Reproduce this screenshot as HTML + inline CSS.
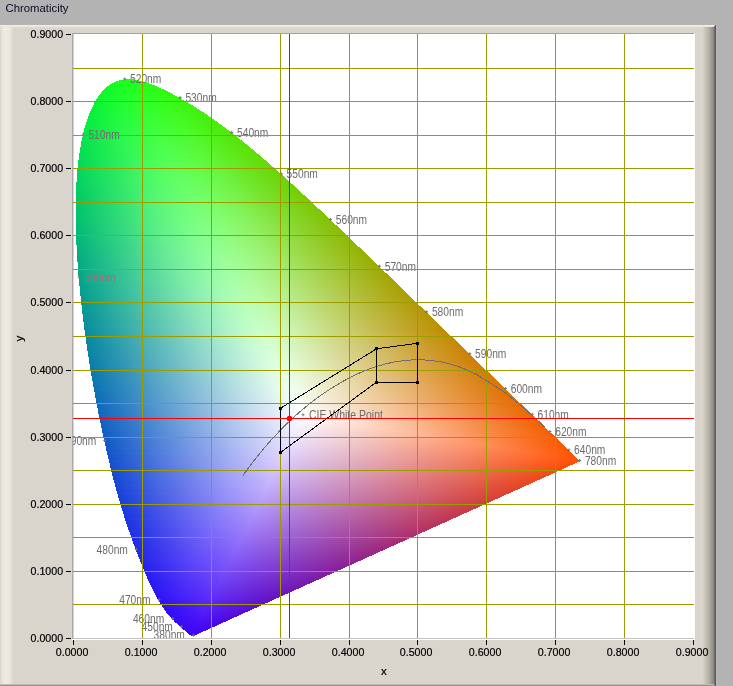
<!DOCTYPE html>
<html><head><meta charset="utf-8"><title>Chromaticity</title>
<style>
html,body{margin:0;padding:0;background:#b3b3b3;}
body{width:733px;height:686px;overflow:hidden;font-family:"Liberation Sans",sans-serif;}
svg{display:block;position:absolute;left:0;top:0;will-change:transform;}
text{font-family:"Liberation Sans",sans-serif;}
</style></head><body>
<svg width="733" height="686" viewBox="0 0 733 686">
<defs>
<linearGradient id="bl" x1="0" x2="1" y1="0" y2="0"><stop offset="0" stop-color="#d8d3c6"/><stop offset="0.12" stop-color="#e6e2d8"/><stop offset="0.4" stop-color="#efece5"/><stop offset="0.7" stop-color="#ebe7de"/><stop offset="0.9" stop-color="#e3dfd5"/><stop offset="1" stop-color="#dad6ce"/></linearGradient>
<linearGradient id="br" x1="0" x2="1" y1="0" y2="0"><stop offset="0" stop-color="#d6d2c6"/><stop offset="0.45" stop-color="#b4b0a6"/><stop offset="0.8" stop-color="#8e8b83"/><stop offset="0.9" stop-color="#6a6862"/><stop offset="1" stop-color="#55534d"/></linearGradient>
<clipPath id="cp"><rect x="73" y="34" width="621" height="604"/></clipPath>
<clipPath id="cl" clip-path="url(#cp)"><path d="M193.5 636.1 L193.4 636.1 L193.4 636.1 L193.4 636.1 L193.4 636.1 L193.4 636.1 L193.4 636.1 L193.3 636.1 L193.3 636.1 L193.3 636.1 L193.3 636.1 L193.3 636.1 L193.2 636.1 L193.2 636.2 L193.2 636.2 L193.1 636.2 L193.1 636.2 L193.1 636.2 L193.1 636.2 L193.0 636.2 L193.0 636.2 L193.0 636.2 L192.9 636.2 L192.9 636.2 L192.8 636.2 L192.8 636.2 L192.8 636.2 L192.7 636.2 L192.7 636.2 L192.7 636.2 L192.6 636.2 L192.6 636.2 L192.5 636.2 L192.5 636.2 L192.5 636.2 L192.4 636.2 L192.4 636.2 L192.3 636.2 L192.3 636.2 L192.2 636.2 L192.2 636.2 L192.1 636.2 L192.0 636.2 L192.0 636.2 L191.9 636.2 L191.8 636.2 L191.7 636.1 L191.6 636.1 L191.5 636.1 L191.4 636.0 L191.3 636.0 L191.2 635.9 L191.1 635.9 L191.0 635.8 L190.9 635.7 L190.8 635.6 L190.6 635.6 L190.5 635.5 L190.3 635.3 L190.2 635.2 L190.0 635.1 L189.8 635.0 L189.6 634.8 L189.5 634.7 L189.3 634.5 L189.1 634.3 L188.9 634.1 L188.6 634.0 L188.4 633.8 L188.2 633.5 L187.9 633.3 L187.6 633.1 L187.4 632.8 L187.1 632.6 L186.8 632.3 L186.4 632.1 L186.1 631.8 L185.8 631.5 L185.4 631.2 L185.0 630.8 L184.6 630.5 L184.2 630.2 L183.8 629.8 L183.3 629.4 L182.9 629.0 L182.4 628.6 L181.9 628.2 L181.3 627.7 L180.8 627.2 L180.2 626.7 L179.6 626.2 L179.0 625.7 L178.3 625.1 L177.6 624.5 L177.0 623.9 L176.2 623.2 L175.5 622.5 L174.7 621.8 L174.0 621.0 L173.2 620.2 L172.3 619.4 L171.5 618.5 L170.6 617.5 L169.7 616.5 L168.7 615.4 L167.8 614.2 L166.7 612.8 L165.6 611.3 L164.4 609.7 L163.2 607.9 L161.9 605.9 L160.6 603.8 L159.2 601.6 L157.8 599.1 L156.3 596.5 L154.8 593.6 L153.2 590.5 L151.5 587.2 L149.8 583.6 L148.0 579.7 L146.2 575.6 L144.3 571.1 L142.3 566.3 L140.2 561.1 L138.1 555.6 L135.8 549.7 L133.5 543.5 L131.1 536.8 L128.6 529.8 L126.0 522.3 L123.5 514.4 L120.9 506.0 L118.3 497.2 L115.7 487.9 L113.1 478.1 L110.6 467.9 L108.0 457.2 L105.4 446.0 L102.9 434.4 L100.3 422.4 L97.8 410.0 L95.4 397.3 L93.0 384.3 L90.7 371.1 L88.6 357.7 L86.5 344.2 L84.6 330.6 L82.9 317.0 L81.3 303.5 L79.9 290.0 L78.6 276.7 L77.6 263.5 L76.8 250.6 L76.2 237.9 L75.8 225.5 L75.6 213.4 L75.7 201.5 L76.1 190.1 L76.7 179.0 L77.6 168.3 L78.8 158.1 L80.2 148.4 L81.9 139.2 L83.9 130.6 L86.2 122.6 L88.7 115.2 L91.5 108.5 L94.5 102.5 L97.8 97.2 L101.2 92.6 L104.8 88.7 L108.6 85.6 L112.5 83.1 L116.6 81.3 L120.8 80.0 L125.0 79.3 L129.3 79.2 L133.7 79.5 L138.1 80.2 L142.6 81.3 L147.1 82.6 L151.6 84.3 L156.1 86.1 L160.6 88.1 L165.1 90.2 L169.6 92.4 L174.0 94.8 L178.4 97.2 L182.8 99.7 L187.1 102.2 L191.4 104.7 L195.6 107.3 L199.7 110.0 L203.9 112.7 L208.0 115.5 L212.1 118.3 L216.1 121.2 L220.2 124.1 L224.2 127.1 L228.2 130.1 L232.3 133.2 L236.3 136.3 L240.3 139.4 L244.3 142.7 L248.3 145.9 L252.2 149.2 L256.2 152.5 L260.2 155.9 L264.1 159.3 L268.1 162.7 L272.0 166.1 L276.0 169.6 L279.9 173.1 L283.9 176.6 L287.8 180.2 L291.7 183.7 L295.7 187.3 L299.6 190.9 L303.6 194.6 L307.5 198.2 L311.4 201.9 L315.4 205.6 L319.3 209.3 L323.3 213.0 L327.2 216.7 L331.2 220.4 L335.1 224.2 L339.1 227.9 L343.0 231.6 L346.9 235.4 L350.8 239.2 L354.7 242.9 L358.7 246.7 L362.6 250.4 L366.5 254.2 L370.4 257.9 L374.3 261.7 L378.2 265.4 L382.1 269.2 L385.9 272.9 L389.8 276.6 L393.6 280.3 L397.4 284.0 L401.2 287.7 L405.0 291.4 L408.7 295.0 L412.5 298.6 L416.2 302.3 L419.9 305.9 L423.6 309.4 L427.2 313.0 L430.9 316.5 L434.5 320.0 L438.1 323.5 L441.6 326.9 L445.1 330.4 L448.6 333.7 L452.1 337.1 L455.5 340.4 L458.9 343.7 L462.2 346.9 L465.5 350.1 L468.8 353.2 L472.0 356.4 L475.2 359.5 L478.3 362.5 L481.3 365.5 L484.3 368.4 L487.3 371.3 L490.1 374.0 L492.9 376.7 L495.6 379.4 L498.3 382.0 L500.9 384.5 L503.5 387.0 L506.0 389.4 L508.4 391.8 L510.9 394.1 L513.2 396.4 L515.6 398.7 L517.8 400.9 L520.0 403.0 L522.1 405.0 L524.2 407.0 L526.1 408.9 L528.1 410.8 L529.9 412.5 L531.7 414.3 L533.5 416.0 L535.1 417.6 L536.8 419.2 L538.3 420.7 L539.9 422.2 L541.3 423.6 L542.7 425.0 L544.1 426.3 L545.4 427.6 L546.7 428.8 L547.9 430.0 L549.1 431.2 L550.2 432.3 L551.3 433.3 L552.3 434.3 L553.4 435.3 L554.3 436.3 L555.3 437.2 L556.2 438.1 L557.1 438.9 L557.9 439.7 L558.7 440.5 L559.5 441.3 L560.3 442.1 L561.1 442.8 L561.8 443.5 L562.5 444.2 L563.2 444.9 L563.9 445.5 L564.5 446.1 L565.1 446.8 L565.8 447.4 L566.4 447.9 L566.9 448.5 L567.5 449.0 L568.0 449.6 L568.5 450.1 L569.0 450.5 L569.5 451.0 L570.0 451.5 L570.4 451.9 L570.8 452.3 L571.2 452.7 L571.6 453.1 L572.0 453.4 L572.4 453.8 L572.7 454.1 L573.0 454.4 L573.4 454.7 L573.7 455.0 L574.0 455.3 L574.2 455.5 L574.5 455.8 L574.8 456.1 L575.0 456.3 L575.2 456.5 L575.4 456.7 L575.7 456.9 L575.9 457.1 L576.0 457.3 L576.2 457.5 L576.4 457.6 L576.5 457.8 L576.7 457.9 L576.8 458.1 L577.0 458.2 L577.1 458.3 L577.2 458.4 L577.3 458.5 L577.4 458.6 L577.5 458.7 L577.6 458.8 L577.7 458.9 L577.8 459.0 L577.9 459.1 L577.9 459.2 L578.0 459.2 L578.1 459.3 L578.2 459.4 L578.3 459.5 L578.4 459.6 L578.4 459.6 L578.5 459.7 L578.6 459.8 L578.7 459.9 L578.7 459.9 L578.8 460.0 L578.9 460.1 L578.9 460.1 L579.0 460.2 L579.1 460.3 L579.1 460.3 L579.2 460.4 L579.2 460.4 L579.3 460.5 L579.3 460.5 L579.4 460.6 L579.4 460.6 L579.5 460.7 L579.5 460.7 L579.6 460.7 L579.6 460.8 L579.6 460.8 L579.7 460.8 L579.7 460.9 L579.7 460.9 L579.7 460.9 L579.7 460.9 L579.7 460.9 L579.8 460.9 L579.7 460.9 L579.7 460.9 L578.7 461.8 L574.8 463.6 L570.9 465.3 L567.1 467.1 L563.2 468.8 L559.3 470.6 L555.5 472.4 L551.6 474.1 L547.7 475.9 L543.8 477.6 L540.0 479.4 L536.1 481.1 L532.2 482.9 L528.4 484.6 L524.5 486.4 L520.6 488.1 L516.7 489.9 L512.9 491.6 L509.0 493.4 L505.1 495.1 L501.3 496.9 L497.4 498.6 L493.5 500.4 L489.6 502.1 L485.8 503.9 L481.9 505.6 L478.0 507.4 L474.2 509.1 L470.3 510.9 L466.4 512.6 L462.5 514.4 L458.7 516.1 L454.8 517.9 L450.9 519.6 L447.1 521.4 L443.2 523.1 L439.3 524.9 L435.4 526.6 L431.6 528.4 L427.7 530.1 L423.8 531.9 L420.0 533.6 L416.1 535.4 L412.2 537.1 L408.3 538.9 L404.5 540.6 L400.6 542.4 L396.7 544.1 L392.9 545.9 L389.0 547.6 L385.1 549.4 L381.2 551.1 L377.4 552.9 L373.5 554.6 L369.6 556.4 L365.7 558.1 L361.9 559.9 L358.0 561.7 L354.1 563.4 L350.3 565.2 L346.4 566.9 L342.5 568.7 L338.6 570.4 L334.8 572.2 L330.9 573.9 L327.0 575.7 L323.2 577.4 L319.3 579.2 L315.4 580.9 L311.5 582.7 L307.7 584.4 L303.8 586.2 L299.9 587.9 L296.1 589.7 L292.2 591.4 L288.3 593.2 L284.4 594.9 L280.6 596.7 L276.7 598.4 L272.8 600.2 L269.0 601.9 L265.1 603.7 L261.2 605.4 L257.3 607.2 L253.5 608.9 L249.6 610.7 L245.7 612.4 L241.9 614.2 L238.0 615.9 L234.1 617.7 L230.2 619.4 L226.4 621.2 L222.5 622.9 L218.6 624.7 L214.8 626.4 L210.9 628.2 L207.0 629.9 L203.1 631.7 L199.3 633.4 L195.4 635.2Z" shape-rendering="crispEdges"/></clipPath>
<linearGradient id="g1" gradientUnits="userSpaceOnUse" x1="121" x2="137" y1="0" y2="0"><stop offset="0" stop-color="#18ff1d"/><stop offset="1" stop-color="#21ff16"/></linearGradient>
<linearGradient id="g2" gradientUnits="userSpaceOnUse" x1="114" x2="145" y1="0" y2="0"><stop offset="0" stop-color="#15fe21"/><stop offset="1" stop-color="#25fe14"/></linearGradient>
<linearGradient id="g3" gradientUnits="userSpaceOnUse" x1="110" x2="151" y1="0" y2="0"><stop offset="0" stop-color="#13fd24"/><stop offset="0.3902" stop-color="#1dff1f"/><stop offset="1" stop-color="#28fd12"/></linearGradient>
<linearGradient id="g4" gradientUnits="userSpaceOnUse" x1="107" x2="156" y1="0" y2="0"><stop offset="0" stop-color="#11fc26"/><stop offset="0.4082" stop-color="#1eff20"/><stop offset="1" stop-color="#2afc11"/></linearGradient>
<linearGradient id="g5" gradientUnits="userSpaceOnUse" x1="105" x2="161" y1="0" y2="0"><stop offset="0" stop-color="#10fb28"/><stop offset="0.5893" stop-color="#24ff1d"/><stop offset="1" stop-color="#2dfb10"/></linearGradient>
<linearGradient id="g6" gradientUnits="userSpaceOnUse" x1="103" x2="165" y1="0" y2="0"><stop offset="0" stop-color="#0ffa2a"/><stop offset="0.5806" stop-color="#26ff1f"/><stop offset="1" stop-color="#2ffa0f"/></linearGradient>
<linearGradient id="g7" gradientUnits="userSpaceOnUse" x1="101" x2="169" y1="0" y2="0"><stop offset="0" stop-color="#0ef92b"/><stop offset="0.4265" stop-color="#22ff24"/><stop offset="1" stop-color="#31f90e"/></linearGradient>
<linearGradient id="g8" gradientUnits="userSpaceOnUse" x1="99" x2="173" y1="0" y2="0"><stop offset="0" stop-color="#0df82d"/><stop offset="0.4324" stop-color="#23ff26"/><stop offset="0.6892" stop-color="#2cfe1d"/><stop offset="1" stop-color="#33f80d"/></linearGradient>
<linearGradient id="g9" gradientUnits="userSpaceOnUse" x1="98" x2="177" y1="0" y2="0"><stop offset="0" stop-color="#0df72f"/><stop offset="0.4937" stop-color="#28ff25"/><stop offset="1" stop-color="#35f70c"/></linearGradient>
<linearGradient id="g10" gradientUnits="userSpaceOnUse" x1="96" x2="180" y1="0" y2="0"><stop offset="0" stop-color="#0cf630"/><stop offset="0.2738" stop-color="#1dfd2d"/><stop offset="0.5" stop-color="#29ff27"/><stop offset="1" stop-color="#37f70c"/></linearGradient>
<linearGradient id="g11" gradientUnits="userSpaceOnUse" x1="95" x2="184" y1="0" y2="0"><stop offset="0" stop-color="#0bf532"/><stop offset="0.2697" stop-color="#1efd2e"/><stop offset="0.4944" stop-color="#2aff28"/><stop offset="0.7079" stop-color="#32fd1e"/><stop offset="1" stop-color="#39f50b"/></linearGradient>
<linearGradient id="g12" gradientUnits="userSpaceOnUse" x1="94" x2="187" y1="0" y2="0"><stop offset="0" stop-color="#0bf533"/><stop offset="0.2688" stop-color="#1efd30"/><stop offset="0.4946" stop-color="#2cff2a"/><stop offset="0.7097" stop-color="#34fd1e"/><stop offset="1" stop-color="#3af50b"/></linearGradient>
<linearGradient id="g13" gradientUnits="userSpaceOnUse" x1="93" x2="191" y1="0" y2="0"><stop offset="0" stop-color="#0af434"/><stop offset="0.2653" stop-color="#1ffc32"/><stop offset="0.4898" stop-color="#2dff2b"/><stop offset="0.7041" stop-color="#35fd1f"/><stop offset="1" stop-color="#3cf40a"/></linearGradient>
<linearGradient id="g14" gradientUnits="userSpaceOnUse" x1="92" x2="194" y1="0" y2="0"><stop offset="0" stop-color="#0af336"/><stop offset="0.2745" stop-color="#20fc33"/><stop offset="0.4902" stop-color="#2eff2c"/><stop offset="0.7059" stop-color="#37fc20"/><stop offset="1" stop-color="#3ef309"/></linearGradient>
<linearGradient id="g15" gradientUnits="userSpaceOnUse" x1="91" x2="197" y1="0" y2="0"><stop offset="0" stop-color="#09f237"/><stop offset="0.2736" stop-color="#21fc35"/><stop offset="0.4906" stop-color="#30ff2e"/><stop offset="0.7075" stop-color="#39fc21"/><stop offset="1" stop-color="#3ff209"/></linearGradient>
<linearGradient id="g16" gradientUnits="userSpaceOnUse" x1="90" x2="200" y1="0" y2="0"><stop offset="0" stop-color="#09f138"/><stop offset="0.2727" stop-color="#22fc36"/><stop offset="0.4909" stop-color="#31ff2f"/><stop offset="0.7091" stop-color="#3afc21"/><stop offset="1" stop-color="#41f108"/></linearGradient>
<linearGradient id="g17" gradientUnits="userSpaceOnUse" x1="89" x2="203" y1="0" y2="0"><stop offset="0" stop-color="#08f03a"/><stop offset="0.2807" stop-color="#23fc37"/><stop offset="0.5" stop-color="#33ff30"/><stop offset="0.7105" stop-color="#3cfc22"/><stop offset="1" stop-color="#42f008"/></linearGradient>
<linearGradient id="g18" gradientUnits="userSpaceOnUse" x1="88" x2="206" y1="0" y2="0"><stop offset="0" stop-color="#08ef3b"/><stop offset="0.2797" stop-color="#24fb39"/><stop offset="0.5" stop-color="#34ff32"/><stop offset="0.7119" stop-color="#3efb23"/><stop offset="1" stop-color="#44ef08"/></linearGradient>
<linearGradient id="g19" gradientUnits="userSpaceOnUse" x1="88" x2="209" y1="0" y2="0"><stop offset="0" stop-color="#08ee3c"/><stop offset="0.281" stop-color="#25fb3a"/><stop offset="0.4959" stop-color="#36ff33"/><stop offset="0.7107" stop-color="#3ffb24"/><stop offset="1" stop-color="#45ee07"/></linearGradient>
<linearGradient id="g20" gradientUnits="userSpaceOnUse" x1="87" x2="212" y1="0" y2="0"><stop offset="0" stop-color="#07ed3d"/><stop offset="0.28" stop-color="#26fb3c"/><stop offset="0.496" stop-color="#37ff35"/><stop offset="0.704" stop-color="#41fb25"/><stop offset="1" stop-color="#47ed07"/></linearGradient>
<linearGradient id="g21" gradientUnits="userSpaceOnUse" x1="86" x2="215" y1="0" y2="0"><stop offset="0" stop-color="#07ec3e"/><stop offset="0.2791" stop-color="#26fb3d"/><stop offset="0.4961" stop-color="#39ff36"/><stop offset="0.7054" stop-color="#42fb26"/><stop offset="1" stop-color="#48ec07"/></linearGradient>
<linearGradient id="g22" gradientUnits="userSpaceOnUse" x1="85" x2="218" y1="0" y2="0"><stop offset="0" stop-color="#07eb40"/><stop offset="0.2782" stop-color="#27fa3f"/><stop offset="0.4962" stop-color="#3aff37"/><stop offset="0.7068" stop-color="#44fb26"/><stop offset="1" stop-color="#4aeb06"/></linearGradient>
<linearGradient id="g23" gradientUnits="userSpaceOnUse" x1="85" x2="221" y1="0" y2="0"><stop offset="0" stop-color="#06eb41"/><stop offset="0.2794" stop-color="#28fa40"/><stop offset="0.4926" stop-color="#3bff39"/><stop offset="0.7059" stop-color="#45fa27"/><stop offset="1" stop-color="#4cea06"/></linearGradient>
<linearGradient id="g24" gradientUnits="userSpaceOnUse" x1="84" x2="223" y1="0" y2="0"><stop offset="0" stop-color="#06e942"/><stop offset="0.2806" stop-color="#29fa42"/><stop offset="0.4964" stop-color="#3dff3a"/><stop offset="0.705" stop-color="#47fa28"/><stop offset="1" stop-color="#4dea06"/></linearGradient>
<linearGradient id="g25" gradientUnits="userSpaceOnUse" x1="84" x2="226" y1="0" y2="0"><stop offset="0" stop-color="#06e943"/><stop offset="0.2817" stop-color="#2afa43"/><stop offset="0.493" stop-color="#3eff3c"/><stop offset="0.7042" stop-color="#48fa29"/><stop offset="1" stop-color="#4ee905"/></linearGradient>
<linearGradient id="g26" gradientUnits="userSpaceOnUse" x1="83" x2="229" y1="0" y2="0"><stop offset="0" stop-color="#05e844"/><stop offset="0.2808" stop-color="#2afa45"/><stop offset="0.4932" stop-color="#3fff3d"/><stop offset="0.7055" stop-color="#4afa2a"/><stop offset="1" stop-color="#50e805"/></linearGradient>
<linearGradient id="g27" gradientUnits="userSpaceOnUse" x1="83" x2="231" y1="0" y2="0"><stop offset="0" stop-color="#05e745"/><stop offset="0.2838" stop-color="#2cfa46"/><stop offset="0.4932" stop-color="#41ff3f"/><stop offset="0.7095" stop-color="#4bf92a"/><stop offset="1" stop-color="#51e705"/></linearGradient>
<linearGradient id="g28" gradientUnits="userSpaceOnUse" x1="82" x2="234" y1="0" y2="0"><stop offset="0" stop-color="#05e646"/><stop offset="0.2895" stop-color="#2dfa47"/><stop offset="0.4934" stop-color="#42ff40"/><stop offset="0.7039" stop-color="#4df92c"/><stop offset="1" stop-color="#52e605"/></linearGradient>
<linearGradient id="g29" gradientUnits="userSpaceOnUse" x1="82" x2="237" y1="0" y2="0"><stop offset="0" stop-color="#05e547"/><stop offset="0.2839" stop-color="#2ef949"/><stop offset="0.4903" stop-color="#44ff41"/><stop offset="0.7032" stop-color="#4ef92c"/><stop offset="1" stop-color="#54e504"/></linearGradient>
<linearGradient id="g30" gradientUnits="userSpaceOnUse" x1="81" x2="239" y1="0" y2="0"><stop offset="0" stop-color="#04e449"/><stop offset="0.2911" stop-color="#2ff94a"/><stop offset="0.4937" stop-color="#45ff43"/><stop offset="0.7089" stop-color="#50f82d"/><stop offset="1" stop-color="#55e404"/></linearGradient>
<linearGradient id="g31" gradientUnits="userSpaceOnUse" x1="81" x2="242" y1="0" y2="0"><stop offset="0" stop-color="#04e34a"/><stop offset="0.2857" stop-color="#2ff94c"/><stop offset="0.4907" stop-color="#46ff44"/><stop offset="0.7081" stop-color="#51f82e"/><stop offset="1" stop-color="#56e304"/></linearGradient>
<linearGradient id="g32" gradientUnits="userSpaceOnUse" x1="80" x2="244" y1="0" y2="0"><stop offset="0" stop-color="#04e24b"/><stop offset="0.2927" stop-color="#31f94d"/><stop offset="0.4939" stop-color="#48ff46"/><stop offset="0.7073" stop-color="#53f82f"/><stop offset="1" stop-color="#57e204"/></linearGradient>
<linearGradient id="g33" gradientUnits="userSpaceOnUse" x1="80" x2="247" y1="0" y2="0"><stop offset="0" stop-color="#04e14c"/><stop offset="0.2874" stop-color="#31f84e"/><stop offset="0.491" stop-color="#49ff47"/><stop offset="0.7066" stop-color="#54f830"/><stop offset="1" stop-color="#59e104"/></linearGradient>
<linearGradient id="g34" gradientUnits="userSpaceOnUse" x1="80" x2="249" y1="0" y2="0"><stop offset="0" stop-color="#04e14d"/><stop offset="0.2899" stop-color="#33f850"/><stop offset="0.4911" stop-color="#4aff49"/><stop offset="0.7101" stop-color="#56f730"/><stop offset="1" stop-color="#5ae003"/></linearGradient>
<linearGradient id="g35" gradientUnits="userSpaceOnUse" x1="79" x2="252" y1="0" y2="0"><stop offset="0" stop-color="#04df4e"/><stop offset="0.289" stop-color="#33f851"/><stop offset="0.4913" stop-color="#4cff4a"/><stop offset="0.711" stop-color="#57f731"/><stop offset="1" stop-color="#5bdf03"/></linearGradient>
<linearGradient id="g36" gradientUnits="userSpaceOnUse" x1="79" x2="254" y1="0" y2="0"><stop offset="0" stop-color="#03df4f"/><stop offset="0.2914" stop-color="#34f853"/><stop offset="0.4914" stop-color="#4dff4b"/><stop offset="0.7086" stop-color="#59f732"/><stop offset="1" stop-color="#5cdf03"/></linearGradient>
<linearGradient id="g37" gradientUnits="userSpaceOnUse" x1="79" x2="256" y1="0" y2="0"><stop offset="0" stop-color="#03de50"/><stop offset="0.2881" stop-color="#35f754"/><stop offset="0.4915" stop-color="#4fff4d"/><stop offset="0.7119" stop-color="#5af733"/><stop offset="1" stop-color="#5dde03"/></linearGradient>
<linearGradient id="g38" gradientUnits="userSpaceOnUse" x1="78" x2="259" y1="0" y2="0"><stop offset="0" stop-color="#03dd51"/><stop offset="0.2928" stop-color="#36f755"/><stop offset="0.4917" stop-color="#50ff4e"/><stop offset="0.5912" stop-color="#57fd44"/><stop offset="0.7127" stop-color="#5cf633"/><stop offset="1" stop-color="#5fdd03"/></linearGradient>
<linearGradient id="g39" gradientUnits="userSpaceOnUse" x1="78" x2="261" y1="0" y2="0"><stop offset="0" stop-color="#03dc52"/><stop offset="0.2951" stop-color="#37f757"/><stop offset="0.4918" stop-color="#51ff50"/><stop offset="0.5902" stop-color="#58fd46"/><stop offset="0.7104" stop-color="#5df635"/><stop offset="1" stop-color="#60dc03"/></linearGradient>
<linearGradient id="g40" gradientUnits="userSpaceOnUse" x1="78" x2="263" y1="0" y2="0"><stop offset="0" stop-color="#03db53"/><stop offset="0.2919" stop-color="#38f758"/><stop offset="0.4919" stop-color="#53ff51"/><stop offset="0.7027" stop-color="#5ef637"/><stop offset="1" stop-color="#61db03"/></linearGradient>
<linearGradient id="g41" gradientUnits="userSpaceOnUse" x1="78" x2="266" y1="0" y2="0"><stop offset="0" stop-color="#03da54"/><stop offset="0.2926" stop-color="#39f759"/><stop offset="0.4894" stop-color="#54ff53"/><stop offset="0.5851" stop-color="#5bfd48"/><stop offset="0.7074" stop-color="#60f637"/><stop offset="1" stop-color="#62da02"/></linearGradient>
<linearGradient id="g42" gradientUnits="userSpaceOnUse" x1="77" x2="268" y1="0" y2="0"><stop offset="0" stop-color="#03d955"/><stop offset="0.2984" stop-color="#3af75b"/><stop offset="0.4031" stop-color="#4bfd59"/><stop offset="0.4974" stop-color="#56ff54"/><stop offset="0.5916" stop-color="#5dfd49"/><stop offset="0.7173" stop-color="#61f536"/><stop offset="1" stop-color="#63d902"/></linearGradient>
<linearGradient id="g43" gradientUnits="userSpaceOnUse" x1="77" x2="270" y1="0" y2="0"><stop offset="0" stop-color="#02d856"/><stop offset="0.3005" stop-color="#3cf75c"/><stop offset="0.4041" stop-color="#4cfd5a"/><stop offset="0.4974" stop-color="#57ff55"/><stop offset="0.5907" stop-color="#5efd4b"/><stop offset="0.7098" stop-color="#63f539"/><stop offset="1" stop-color="#64d802"/></linearGradient>
<linearGradient id="g44" gradientUnits="userSpaceOnUse" x1="77" x2="273" y1="0" y2="0"><stop offset="0" stop-color="#02d757"/><stop offset="0.2959" stop-color="#3cf65d"/><stop offset="0.4031" stop-color="#4efd5c"/><stop offset="0.4949" stop-color="#59ff56"/><stop offset="0.5918" stop-color="#60fc4b"/><stop offset="0.7143" stop-color="#64f438"/><stop offset="1" stop-color="#66d702"/></linearGradient>
<linearGradient id="g45" gradientUnits="userSpaceOnUse" x1="77" x2="275" y1="0" y2="0"><stop offset="0" stop-color="#02d758"/><stop offset="0.298" stop-color="#3ef65f"/><stop offset="0.404" stop-color="#4ffd5d"/><stop offset="0.4949" stop-color="#5aff58"/><stop offset="0.5909" stop-color="#61fc4d"/><stop offset="0.7121" stop-color="#65f43a"/><stop offset="1" stop-color="#67d602"/></linearGradient>
<linearGradient id="g46" gradientUnits="userSpaceOnUse" x1="76" x2="277" y1="0" y2="0"><stop offset="0" stop-color="#02d559"/><stop offset="0.3035" stop-color="#3ff660"/><stop offset="0.408" stop-color="#50fd5f"/><stop offset="0.4975" stop-color="#5bff59"/><stop offset="0.592" stop-color="#62fc4e"/><stop offset="0.7114" stop-color="#67f43b"/><stop offset="1" stop-color="#68d602"/></linearGradient>
<linearGradient id="g47" gradientUnits="userSpaceOnUse" x1="76" x2="279" y1="0" y2="0"><stop offset="0" stop-color="#02d45a"/><stop offset="0.3005" stop-color="#3ff561"/><stop offset="0.4089" stop-color="#52fd60"/><stop offset="0.4975" stop-color="#5dff5b"/><stop offset="0.5911" stop-color="#64fc4f"/><stop offset="0.7094" stop-color="#68f43c"/><stop offset="1" stop-color="#69d502"/></linearGradient>
<linearGradient id="g48" gradientUnits="userSpaceOnUse" x1="76" x2="282" y1="0" y2="0"><stop offset="0" stop-color="#02d45b"/><stop offset="0.301" stop-color="#41f563"/><stop offset="0.4078" stop-color="#53fd61"/><stop offset="0.4951" stop-color="#5eff5c"/><stop offset="0.5874" stop-color="#65fc51"/><stop offset="0.7087" stop-color="#6af43d"/><stop offset="1" stop-color="#6bd302"/></linearGradient>
<linearGradient id="g49" gradientUnits="userSpaceOnUse" x1="76" x2="284" y1="0" y2="0"><stop offset="0" stop-color="#02d35c"/><stop offset="0.3029" stop-color="#42f564"/><stop offset="0.4087" stop-color="#54fd63"/><stop offset="0.4952" stop-color="#60ff5d"/><stop offset="0.5913" stop-color="#67fc52"/><stop offset="0.7115" stop-color="#6bf33d"/><stop offset="1" stop-color="#6cd302"/></linearGradient>
<linearGradient id="g50" gradientUnits="userSpaceOnUse" x1="76" x2="286" y1="0" y2="0"><stop offset="0" stop-color="#02d25d"/><stop offset="0.3" stop-color="#42f565"/><stop offset="0.4048" stop-color="#55fd64"/><stop offset="0.4952" stop-color="#61ff5f"/><stop offset="0.5857" stop-color="#68fc54"/><stop offset="0.7" stop-color="#6cf441"/><stop offset="1" stop-color="#6dd202"/></linearGradient>
<linearGradient id="g51" gradientUnits="userSpaceOnUse" x1="76" x2="288" y1="0" y2="0"><stop offset="0" stop-color="#02d15e"/><stop offset="0.3019" stop-color="#44f567"/><stop offset="0.4057" stop-color="#56fd66"/><stop offset="0.4953" stop-color="#62ff60"/><stop offset="0.5849" stop-color="#69fc55"/><stop offset="0.7028" stop-color="#6ef441"/><stop offset="1" stop-color="#6ed102"/></linearGradient>
<linearGradient id="g52" gradientUnits="userSpaceOnUse" x1="76" x2="291" y1="0" y2="0"><stop offset="0" stop-color="#02d05e"/><stop offset="0.3023" stop-color="#45f568"/><stop offset="0.4047" stop-color="#58fd67"/><stop offset="0.493" stop-color="#64ff62"/><stop offset="0.586" stop-color="#6bfc56"/><stop offset="0.7023" stop-color="#6ff342"/><stop offset="1" stop-color="#6fd002"/></linearGradient>
<linearGradient id="g53" gradientUnits="userSpaceOnUse" x1="75" x2="293" y1="0" y2="0"><stop offset="0" stop-color="#02cf60"/><stop offset="0.3028" stop-color="#45f469"/><stop offset="0.4083" stop-color="#59fd68"/><stop offset="0.4954" stop-color="#65ff63"/><stop offset="0.5872" stop-color="#6cfc57"/><stop offset="0.7064" stop-color="#70f342"/><stop offset="1" stop-color="#70cf01"/></linearGradient>
<linearGradient id="g54" gradientUnits="userSpaceOnUse" x1="75" x2="295" y1="0" y2="0"><stop offset="0" stop-color="#02ce61"/><stop offset="0.3045" stop-color="#46f46b"/><stop offset="0.4091" stop-color="#5afc6a"/><stop offset="0.4955" stop-color="#66ff65"/><stop offset="0.5864" stop-color="#6dfc59"/><stop offset="0.7045" stop-color="#72f343"/><stop offset="1" stop-color="#71ce01"/></linearGradient>
<linearGradient id="g55" gradientUnits="userSpaceOnUse" x1="75" x2="297" y1="0" y2="0"><stop offset="0" stop-color="#02cd62"/><stop offset="0.3063" stop-color="#48f46c"/><stop offset="0.4099" stop-color="#5cfc6b"/><stop offset="0.4955" stop-color="#68ff66"/><stop offset="0.5811" stop-color="#6ffc5b"/><stop offset="0.6982" stop-color="#73f346"/><stop offset="1" stop-color="#72cd01"/></linearGradient>
<linearGradient id="g56" gradientUnits="userSpaceOnUse" x1="75" x2="299" y1="0" y2="0"><stop offset="0" stop-color="#02cc62"/><stop offset="0.3036" stop-color="#48f36d"/><stop offset="0.4107" stop-color="#5dfc6d"/><stop offset="0.4955" stop-color="#69ff67"/><stop offset="0.5804" stop-color="#70fc5c"/><stop offset="0.6964" stop-color="#74f347"/><stop offset="1" stop-color="#73cd01"/></linearGradient>
<linearGradient id="g57" gradientUnits="userSpaceOnUse" x1="75" x2="301" y1="0" y2="0"><stop offset="0" stop-color="#01cb63"/><stop offset="0.3053" stop-color="#49f36f"/><stop offset="0.4115" stop-color="#5efc6e"/><stop offset="0.4956" stop-color="#6aff69"/><stop offset="0.5841" stop-color="#72fc5d"/><stop offset="0.6991" stop-color="#76f347"/><stop offset="1" stop-color="#74cc01"/></linearGradient>
<linearGradient id="g58" gradientUnits="userSpaceOnUse" x1="75" x2="304" y1="0" y2="0"><stop offset="0" stop-color="#01cb64"/><stop offset="0.3057" stop-color="#4bf370"/><stop offset="0.4105" stop-color="#60fc6f"/><stop offset="0.4934" stop-color="#6cff6a"/><stop offset="0.5808" stop-color="#73fc5e"/><stop offset="0.6987" stop-color="#77f248"/><stop offset="1" stop-color="#76ca01"/></linearGradient>
<linearGradient id="g59" gradientUnits="userSpaceOnUse" x1="75" x2="306" y1="0" y2="0"><stop offset="0" stop-color="#01ca65"/><stop offset="0.303" stop-color="#4bf371"/><stop offset="0.4069" stop-color="#60fc71"/><stop offset="0.4935" stop-color="#6dff6c"/><stop offset="0.5758" stop-color="#74fc60"/><stop offset="0.6883" stop-color="#78f34b"/><stop offset="1" stop-color="#77ca01"/></linearGradient>
<linearGradient id="g60" gradientUnits="userSpaceOnUse" x1="75" x2="308" y1="0" y2="0"><stop offset="0" stop-color="#01c966"/><stop offset="0.3047" stop-color="#4cf372"/><stop offset="0.4077" stop-color="#61fc72"/><stop offset="0.4936" stop-color="#6eff6d"/><stop offset="0.5794" stop-color="#76fc61"/><stop offset="0.691" stop-color="#7af24c"/><stop offset="1" stop-color="#78c901"/></linearGradient>
<linearGradient id="g61" gradientUnits="userSpaceOnUse" x1="75" x2="310" y1="0" y2="0"><stop offset="0" stop-color="#01c867"/><stop offset="0.3064" stop-color="#4ef274"/><stop offset="0.4085" stop-color="#63fc74"/><stop offset="0.4936" stop-color="#70ff6e"/><stop offset="0.5787" stop-color="#77fc62"/><stop offset="0.6894" stop-color="#7bf24d"/><stop offset="1" stop-color="#79c801"/></linearGradient>
<linearGradient id="g62" gradientUnits="userSpaceOnUse" x1="75" x2="312" y1="0" y2="0"><stop offset="0" stop-color="#01c768"/><stop offset="0.308" stop-color="#4ff275"/><stop offset="0.4093" stop-color="#64fc75"/><stop offset="0.4937" stop-color="#71ff70"/><stop offset="0.5781" stop-color="#78fc64"/><stop offset="0.692" stop-color="#7cf24d"/><stop offset="1" stop-color="#7ac701"/></linearGradient>
<linearGradient id="g63" gradientUnits="userSpaceOnUse" x1="75" x2="314" y1="0" y2="0"><stop offset="0" stop-color="#01c669"/><stop offset="0.3054" stop-color="#4ff276"/><stop offset="0.41" stop-color="#65fc76"/><stop offset="0.4937" stop-color="#73ff71"/><stop offset="0.5774" stop-color="#7afc65"/><stop offset="0.6904" stop-color="#7df24f"/><stop offset="1" stop-color="#7bc601"/></linearGradient>
<linearGradient id="g64" gradientUnits="userSpaceOnUse" x1="75" x2="317" y1="0" y2="0"><stop offset="0" stop-color="#01c56a"/><stop offset="0.3058" stop-color="#50f278"/><stop offset="0.4091" stop-color="#67fc78"/><stop offset="0.4917" stop-color="#74ff73"/><stop offset="0.5744" stop-color="#7bfc67"/><stop offset="0.6818" stop-color="#7ff251"/><stop offset="1" stop-color="#7cc501"/></linearGradient>
<linearGradient id="g65" gradientUnits="userSpaceOnUse" x1="75" x2="319" y1="0" y2="0"><stop offset="0" stop-color="#01c46a"/><stop offset="0.3115" stop-color="#53f279"/><stop offset="0.4139" stop-color="#69fc79"/><stop offset="0.4959" stop-color="#76ff74"/><stop offset="0.5779" stop-color="#7dfc67"/><stop offset="0.6844" stop-color="#80f251"/><stop offset="1" stop-color="#7dc401"/></linearGradient>
<linearGradient id="g66" gradientUnits="userSpaceOnUse" x1="75" x2="321" y1="0" y2="0"><stop offset="0" stop-color="#01c36b"/><stop offset="0.313" stop-color="#54f27a"/><stop offset="0.4146" stop-color="#6afc7a"/><stop offset="0.4959" stop-color="#77ff75"/><stop offset="0.5772" stop-color="#7efc69"/><stop offset="0.6829" stop-color="#81f253"/><stop offset="1" stop-color="#7ec301"/></linearGradient>
<linearGradient id="g67" gradientUnits="userSpaceOnUse" x1="75" x2="323" y1="0" y2="0"><stop offset="0" stop-color="#01c36c"/><stop offset="0.3105" stop-color="#54f17c"/><stop offset="0.4153" stop-color="#6cfc7c"/><stop offset="0.496" stop-color="#79ff76"/><stop offset="0.5766" stop-color="#7ffc6a"/><stop offset="0.6815" stop-color="#83f254"/><stop offset="1" stop-color="#7fc201"/></linearGradient>
<linearGradient id="g68" gradientUnits="userSpaceOnUse" x1="75" x2="325" y1="0" y2="0"><stop offset="0" stop-color="#01c26d"/><stop offset="0.312" stop-color="#56f17d"/><stop offset="0.416" stop-color="#6dfc7d"/><stop offset="0.496" stop-color="#7aff78"/><stop offset="0.576" stop-color="#81fc6c"/><stop offset="0.684" stop-color="#84f155"/><stop offset="1" stop-color="#80c201"/></linearGradient>
<linearGradient id="g69" gradientUnits="userSpaceOnUse" x1="75" x2="327" y1="0" y2="0"><stop offset="0" stop-color="#01c16e"/><stop offset="0.3135" stop-color="#57f17e"/><stop offset="0.4167" stop-color="#6efc7e"/><stop offset="0.496" stop-color="#7bff79"/><stop offset="0.5754" stop-color="#82fc6d"/><stop offset="0.6825" stop-color="#85f156"/><stop offset="1" stop-color="#81c101"/></linearGradient>
<linearGradient id="g70" gradientUnits="userSpaceOnUse" x1="75" x2="329" y1="0" y2="0"><stop offset="0" stop-color="#01c06f"/><stop offset="0.315" stop-color="#58f17f"/><stop offset="0.4173" stop-color="#6ffc80"/><stop offset="0.4961" stop-color="#7dff7b"/><stop offset="0.5748" stop-color="#83fc6e"/><stop offset="0.6811" stop-color="#87f157"/><stop offset="1" stop-color="#82c001"/></linearGradient>
<linearGradient id="g71" gradientUnits="userSpaceOnUse" x1="75" x2="331" y1="0" y2="0"><stop offset="0" stop-color="#01bf70"/><stop offset="0.3164" stop-color="#59f181"/><stop offset="0.418" stop-color="#71fc81"/><stop offset="0.4961" stop-color="#7eff7c"/><stop offset="0.5742" stop-color="#85fc70"/><stop offset="0.6797" stop-color="#88f159"/><stop offset="1" stop-color="#84bf01"/></linearGradient>
<linearGradient id="g72" gradientUnits="userSpaceOnUse" x1="75" x2="334" y1="0" y2="0"><stop offset="0" stop-color="#01be71"/><stop offset="0.3127" stop-color="#5af082"/><stop offset="0.417" stop-color="#72fc82"/><stop offset="0.4942" stop-color="#7fff7d"/><stop offset="0.5714" stop-color="#86fc71"/><stop offset="0.6718" stop-color="#89f15b"/><stop offset="1" stop-color="#85be01"/></linearGradient>
<linearGradient id="g73" gradientUnits="userSpaceOnUse" x1="75" x2="336" y1="0" y2="0"><stop offset="0" stop-color="#01bd72"/><stop offset="0.3142" stop-color="#5bf083"/><stop offset="0.4176" stop-color="#73fc84"/><stop offset="0.4943" stop-color="#81ff7f"/><stop offset="0.5709" stop-color="#87fc73"/><stop offset="0.6743" stop-color="#8af15b"/><stop offset="1" stop-color="#86bd01"/></linearGradient>
<linearGradient id="g74" gradientUnits="userSpaceOnUse" x1="75" x2="338" y1="0" y2="0"><stop offset="0" stop-color="#01bc72"/><stop offset="0.3156" stop-color="#5cf084"/><stop offset="0.4183" stop-color="#75fc85"/><stop offset="0.4943" stop-color="#82ff80"/><stop offset="0.5703" stop-color="#89fc74"/><stop offset="0.673" stop-color="#8cf15d"/><stop offset="1" stop-color="#87bc01"/></linearGradient>
<linearGradient id="g75" gradientUnits="userSpaceOnUse" x1="75" x2="340" y1="0" y2="0"><stop offset="0" stop-color="#01bb73"/><stop offset="0.317" stop-color="#5df086"/><stop offset="0.4189" stop-color="#76fc87"/><stop offset="0.4943" stop-color="#83ff82"/><stop offset="0.5698" stop-color="#8afc75"/><stop offset="0.6717" stop-color="#8df15e"/><stop offset="1" stop-color="#88bb01"/></linearGradient>
<linearGradient id="g76" gradientUnits="userSpaceOnUse" x1="75" x2="342" y1="0" y2="0"><stop offset="0" stop-color="#01ba74"/><stop offset="0.3184" stop-color="#5ff087"/><stop offset="0.4195" stop-color="#77fc88"/><stop offset="0.4944" stop-color="#85ff83"/><stop offset="0.5693" stop-color="#8bfc77"/><stop offset="0.6704" stop-color="#8ef05f"/><stop offset="1" stop-color="#89ba01"/></linearGradient>
<linearGradient id="g77" gradientUnits="userSpaceOnUse" x1="75" x2="344" y1="0" y2="0"><stop offset="0" stop-color="#01b975"/><stop offset="0.3197" stop-color="#60f088"/><stop offset="0.4201" stop-color="#79fc89"/><stop offset="0.4944" stop-color="#86ff84"/><stop offset="0.5688" stop-color="#8dfb78"/><stop offset="0.6691" stop-color="#90f061"/><stop offset="1" stop-color="#8ab901"/></linearGradient>
<linearGradient id="g78" gradientUnits="userSpaceOnUse" x1="75" x2="346" y1="0" y2="0"><stop offset="0" stop-color="#02b876"/><stop offset="0.321" stop-color="#61f08a"/><stop offset="0.4207" stop-color="#7afc8b"/><stop offset="0.4945" stop-color="#87ff86"/><stop offset="0.572" stop-color="#8efb79"/><stop offset="0.6716" stop-color="#91f061"/><stop offset="1" stop-color="#8bb801"/></linearGradient>
<linearGradient id="g79" gradientUnits="userSpaceOnUse" x1="75" x2="348" y1="0" y2="0"><stop offset="0" stop-color="#02b777"/><stop offset="0.3187" stop-color="#61ef8b"/><stop offset="0.4212" stop-color="#7bfc8c"/><stop offset="0.4945" stop-color="#89ff87"/><stop offset="0.5714" stop-color="#8ffb7a"/><stop offset="0.6703" stop-color="#92f062"/><stop offset="1" stop-color="#8cb801"/></linearGradient>
<linearGradient id="g80" gradientUnits="userSpaceOnUse" x1="75" x2="350" y1="0" y2="0"><stop offset="0" stop-color="#02b778"/><stop offset="0.32" stop-color="#63ef8c"/><stop offset="0.4218" stop-color="#7dfc8d"/><stop offset="0.4945" stop-color="#8aff89"/><stop offset="0.5709" stop-color="#91fb7b"/><stop offset="0.6691" stop-color="#93f064"/><stop offset="1" stop-color="#8db701"/></linearGradient>
<linearGradient id="g81" gradientUnits="userSpaceOnUse" x1="75" x2="352" y1="0" y2="0"><stop offset="0" stop-color="#02b679"/><stop offset="0.3213" stop-color="#64ef8d"/><stop offset="0.4224" stop-color="#7efb8f"/><stop offset="0.4946" stop-color="#8bff8a"/><stop offset="0.5704" stop-color="#92fb7d"/><stop offset="0.6679" stop-color="#95f065"/><stop offset="1" stop-color="#8eb601"/></linearGradient>
<linearGradient id="g82" gradientUnits="userSpaceOnUse" x1="75" x2="355" y1="0" y2="0"><stop offset="0" stop-color="#02b579"/><stop offset="0.3214" stop-color="#65ef8f"/><stop offset="0.4214" stop-color="#7ffb90"/><stop offset="0.4929" stop-color="#8dff8b"/><stop offset="0.5643" stop-color="#93fb7f"/><stop offset="0.6607" stop-color="#96f067"/><stop offset="1" stop-color="#90b501"/></linearGradient>
<linearGradient id="g83" gradientUnits="userSpaceOnUse" x1="75" x2="357" y1="0" y2="0"><stop offset="0" stop-color="#02b47a"/><stop offset="0.0071" stop-color="#02b47a"/><stop offset="0.3227" stop-color="#66ef90"/><stop offset="0.422" stop-color="#81fb91"/><stop offset="0.4929" stop-color="#8eff8d"/><stop offset="0.5638" stop-color="#95fb80"/><stop offset="0.6596" stop-color="#97f069"/><stop offset="1" stop-color="#91b400"/></linearGradient>
<linearGradient id="g84" gradientUnits="userSpaceOnUse" x1="75" x2="359" y1="0" y2="0"><stop offset="0" stop-color="#02b37b"/><stop offset="0.007" stop-color="#02b37b"/><stop offset="0.3239" stop-color="#68ee91"/><stop offset="0.4225" stop-color="#82fb93"/><stop offset="0.493" stop-color="#8fff8e"/><stop offset="0.5634" stop-color="#96fb82"/><stop offset="0.6585" stop-color="#98f06a"/><stop offset="1" stop-color="#92b300"/></linearGradient>
<linearGradient id="g85" gradientUnits="userSpaceOnUse" x1="76" x2="361" y1="0" y2="0"><stop offset="0" stop-color="#02b27c"/><stop offset="0.3228" stop-color="#69ee92"/><stop offset="0.4211" stop-color="#83fb94"/><stop offset="0.4912" stop-color="#91ff90"/><stop offset="0.5614" stop-color="#97fb83"/><stop offset="0.6561" stop-color="#9af06b"/><stop offset="1" stop-color="#93b200"/></linearGradient>
<linearGradient id="g86" gradientUnits="userSpaceOnUse" x1="76" x2="363" y1="0" y2="0"><stop offset="0" stop-color="#02b17d"/><stop offset="0.324" stop-color="#6aee94"/><stop offset="0.4216" stop-color="#85fb95"/><stop offset="0.4913" stop-color="#92ff91"/><stop offset="0.561" stop-color="#99fb85"/><stop offset="0.6551" stop-color="#9bf06d"/><stop offset="1" stop-color="#94b100"/></linearGradient>
<linearGradient id="g87" gradientUnits="userSpaceOnUse" x1="76" x2="365" y1="0" y2="0"><stop offset="0" stop-color="#02b07e"/><stop offset="0.3253" stop-color="#6bee95"/><stop offset="0.4256" stop-color="#87fc97"/><stop offset="0.4948" stop-color="#94ff92"/><stop offset="0.5675" stop-color="#9afb84"/><stop offset="0.6574" stop-color="#9cef6d"/><stop offset="1" stop-color="#95b000"/></linearGradient>
<linearGradient id="g88" gradientUnits="userSpaceOnUse" x1="76" x2="367" y1="0" y2="0"><stop offset="0" stop-color="#02af7e"/><stop offset="0.3265" stop-color="#6dee96"/><stop offset="0.4261" stop-color="#88fb98"/><stop offset="0.4948" stop-color="#95ff93"/><stop offset="0.567" stop-color="#9cfb86"/><stop offset="0.6564" stop-color="#9def6e"/><stop offset="1" stop-color="#96af00"/></linearGradient>
<linearGradient id="g89" gradientUnits="userSpaceOnUse" x1="76" x2="369" y1="0" y2="0"><stop offset="0" stop-color="#02ae7f"/><stop offset="0.3276" stop-color="#6eee97"/><stop offset="0.4266" stop-color="#89fb99"/><stop offset="0.4949" stop-color="#97ff95"/><stop offset="0.5666" stop-color="#9dfb87"/><stop offset="0.6553" stop-color="#9fef6f"/><stop offset="1" stop-color="#97ae00"/></linearGradient>
<linearGradient id="g90" gradientUnits="userSpaceOnUse" x1="76" x2="371" y1="0" y2="0"><stop offset="0" stop-color="#02ad80"/><stop offset="0.3288" stop-color="#6fee99"/><stop offset="0.4271" stop-color="#8bfb9b"/><stop offset="0.4949" stop-color="#98ff96"/><stop offset="0.5661" stop-color="#9efb88"/><stop offset="0.6542" stop-color="#a0ef71"/><stop offset="1" stop-color="#98ae00"/></linearGradient>
<linearGradient id="g91" gradientUnits="userSpaceOnUse" x1="76" x2="373" y1="0" y2="0"><stop offset="0" stop-color="#02ac81"/><stop offset="0.33" stop-color="#70ee9a"/><stop offset="0.4276" stop-color="#8cfb9c"/><stop offset="0.4949" stop-color="#99ff98"/><stop offset="0.5657" stop-color="#9ffb8a"/><stop offset="0.6532" stop-color="#a1ef72"/><stop offset="1" stop-color="#99ad00"/></linearGradient>
<linearGradient id="g92" gradientUnits="userSpaceOnUse" x1="76" x2="375" y1="0" y2="0"><stop offset="0" stop-color="#02ac82"/><stop offset="0.0067" stop-color="#02ac81"/><stop offset="0.3311" stop-color="#71ed9b"/><stop offset="0.4281" stop-color="#8dfb9d"/><stop offset="0.495" stop-color="#9bff99"/><stop offset="0.5652" stop-color="#a1fb8b"/><stop offset="0.6522" stop-color="#a2ef73"/><stop offset="1" stop-color="#9aac00"/></linearGradient>
<linearGradient id="g93" gradientUnits="userSpaceOnUse" x1="77" x2="377" y1="0" y2="0"><stop offset="0" stop-color="#02ab82"/><stop offset="0.33" stop-color="#73ed9c"/><stop offset="0.4267" stop-color="#8efb9f"/><stop offset="0.4933" stop-color="#9cff9a"/><stop offset="0.5633" stop-color="#a2fa8d"/><stop offset="0.65" stop-color="#a4ee75"/><stop offset="1" stop-color="#9bab00"/></linearGradient>
<linearGradient id="g94" gradientUnits="userSpaceOnUse" x1="77" x2="380" y1="0" y2="0"><stop offset="0" stop-color="#02aa83"/><stop offset="0.33" stop-color="#74ed9e"/><stop offset="0.4257" stop-color="#90fba0"/><stop offset="0.4917" stop-color="#9dff9c"/><stop offset="0.5578" stop-color="#a3fb8f"/><stop offset="0.6436" stop-color="#a5ef77"/><stop offset="0.9934" stop-color="#9caa01"/><stop offset="1" stop-color="#9caa00"/></linearGradient>
<linearGradient id="g95" gradientUnits="userSpaceOnUse" x1="77" x2="382" y1="0" y2="0"><stop offset="0" stop-color="#02a984"/><stop offset="0.3311" stop-color="#75ed9f"/><stop offset="0.4262" stop-color="#91fba1"/><stop offset="0.4918" stop-color="#9fff9d"/><stop offset="0.5574" stop-color="#a5fb90"/><stop offset="0.6426" stop-color="#a6ef78"/><stop offset="1" stop-color="#9da900"/></linearGradient>
<linearGradient id="g96" gradientUnits="userSpaceOnUse" x1="77" x2="384" y1="0" y2="0"><stop offset="0" stop-color="#03a885"/><stop offset="0.3322" stop-color="#76eda0"/><stop offset="0.4267" stop-color="#92fba3"/><stop offset="0.4919" stop-color="#a0ff9f"/><stop offset="0.557" stop-color="#a6fb91"/><stop offset="0.6417" stop-color="#a7ef7a"/><stop offset="1" stop-color="#9ea800"/></linearGradient>
<linearGradient id="g97" gradientUnits="userSpaceOnUse" x1="77" x2="386" y1="0" y2="0"><stop offset="0" stop-color="#03a786"/><stop offset="0.3333" stop-color="#77eda1"/><stop offset="0.4272" stop-color="#94fba4"/><stop offset="0.4919" stop-color="#a1ffa0"/><stop offset="0.5566" stop-color="#a7fb93"/><stop offset="0.6375" stop-color="#a9ef7c"/><stop offset="1" stop-color="#9fa700"/></linearGradient>
<linearGradient id="g98" gradientUnits="userSpaceOnUse" x1="77" x2="388" y1="0" y2="0"><stop offset="0" stop-color="#03a687"/><stop offset="0.0064" stop-color="#03a786"/><stop offset="0.3344" stop-color="#79eda2"/><stop offset="0.4277" stop-color="#95fba5"/><stop offset="0.492" stop-color="#a3ffa1"/><stop offset="0.5563" stop-color="#a8fb94"/><stop offset="0.6367" stop-color="#aaef7d"/><stop offset="1" stop-color="#a0a600"/></linearGradient>
<linearGradient id="g99" gradientUnits="userSpaceOnUse" x1="77" x2="390" y1="0" y2="0"><stop offset="0" stop-color="#03a588"/><stop offset="0.0064" stop-color="#03a687"/><stop offset="0.3355" stop-color="#7aeca4"/><stop offset="0.4281" stop-color="#96fba7"/><stop offset="0.492" stop-color="#a4ffa3"/><stop offset="0.5559" stop-color="#aafb96"/><stop offset="0.6358" stop-color="#abef7e"/><stop offset="1" stop-color="#a1a500"/></linearGradient>
<linearGradient id="g100" gradientUnits="userSpaceOnUse" x1="78" x2="392" y1="0" y2="0"><stop offset="0" stop-color="#03a588"/><stop offset="0.3344" stop-color="#7beca5"/><stop offset="0.4268" stop-color="#97fba8"/><stop offset="0.4904" stop-color="#a5ffa4"/><stop offset="0.5541" stop-color="#abfb97"/><stop offset="0.6338" stop-color="#acef80"/><stop offset="1" stop-color="#a2a400"/></linearGradient>
<linearGradient id="g101" gradientUnits="userSpaceOnUse" x1="78" x2="394" y1="0" y2="0"><stop offset="0" stop-color="#03a489"/><stop offset="0.3354" stop-color="#7ceca6"/><stop offset="0.4272" stop-color="#99fba9"/><stop offset="0.4905" stop-color="#a7ffa6"/><stop offset="0.5538" stop-color="#acfb98"/><stop offset="0.6329" stop-color="#aeef81"/><stop offset="1" stop-color="#a3a400"/></linearGradient>
<linearGradient id="g102" gradientUnits="userSpaceOnUse" x1="78" x2="396" y1="0" y2="0"><stop offset="0" stop-color="#03a38a"/><stop offset="0.3365" stop-color="#7eeca7"/><stop offset="0.4277" stop-color="#9afbab"/><stop offset="0.4906" stop-color="#a8ffa7"/><stop offset="0.5535" stop-color="#aefb9a"/><stop offset="0.6321" stop-color="#afef82"/><stop offset="1" stop-color="#a5a300"/></linearGradient>
<linearGradient id="g103" gradientUnits="userSpaceOnUse" x1="78" x2="398" y1="0" y2="0"><stop offset="0" stop-color="#03a28b"/><stop offset="0.3375" stop-color="#7feca9"/><stop offset="0.4281" stop-color="#9bfbac"/><stop offset="0.4906" stop-color="#a9ffa8"/><stop offset="0.5531" stop-color="#affb9b"/><stop offset="0.6312" stop-color="#b0ef84"/><stop offset="1" stop-color="#a6a200"/></linearGradient>
<linearGradient id="g104" gradientUnits="userSpaceOnUse" x1="78" x2="400" y1="0" y2="0"><stop offset="0" stop-color="#03a18c"/><stop offset="0.0062" stop-color="#03a18b"/><stop offset="0.3385" stop-color="#80ecaa"/><stop offset="0.4286" stop-color="#9dfbad"/><stop offset="0.4907" stop-color="#abffaa"/><stop offset="0.5528" stop-color="#b0fb9c"/><stop offset="0.6304" stop-color="#b1ee85"/><stop offset="1" stop-color="#a7a100"/></linearGradient>
<linearGradient id="g105" gradientUnits="userSpaceOnUse" x1="79" x2="402" y1="0" y2="0"><stop offset="0" stop-color="#03a08c"/><stop offset="0.3344" stop-color="#80ebab"/><stop offset="0.4272" stop-color="#9efbaf"/><stop offset="0.4892" stop-color="#acffab"/><stop offset="0.5511" stop-color="#b2fb9e"/><stop offset="0.6285" stop-color="#b3ee86"/><stop offset="1" stop-color="#a8a000"/></linearGradient>
<linearGradient id="g106" gradientUnits="userSpaceOnUse" x1="79" x2="404" y1="0" y2="0"><stop offset="0" stop-color="#039f8d"/><stop offset="0.3385" stop-color="#82ebac"/><stop offset="0.4277" stop-color="#9ffab0"/><stop offset="0.4892" stop-color="#adffac"/><stop offset="0.5477" stop-color="#b3fba0"/><stop offset="0.6246" stop-color="#b4ef88"/><stop offset="1" stop-color="#a99f00"/></linearGradient>
<linearGradient id="g107" gradientUnits="userSpaceOnUse" x1="79" x2="406" y1="0" y2="0"><stop offset="0" stop-color="#049e8e"/><stop offset="0.3394" stop-color="#83ebad"/><stop offset="0.4312" stop-color="#a1fbb1"/><stop offset="0.4893" stop-color="#afffae"/><stop offset="0.5474" stop-color="#b4fba1"/><stop offset="0.6239" stop-color="#b5ef8a"/><stop offset="1" stop-color="#aa9e00"/></linearGradient>
<linearGradient id="g108" gradientUnits="userSpaceOnUse" x1="79" x2="408" y1="0" y2="0"><stop offset="0" stop-color="#049d8f"/><stop offset="0.3404" stop-color="#85ebaf"/><stop offset="0.4286" stop-color="#a2fab2"/><stop offset="0.4894" stop-color="#b0ffaf"/><stop offset="0.5471" stop-color="#b5fba3"/><stop offset="0.6231" stop-color="#b6ef8b"/><stop offset="1" stop-color="#ab9d00"/></linearGradient>
<linearGradient id="g109" gradientUnits="userSpaceOnUse" x1="79" x2="411" y1="0" y2="0"><stop offset="0" stop-color="#049c90"/><stop offset="0.006" stop-color="#049d8f"/><stop offset="0.3404" stop-color="#86ebb0"/><stop offset="0.4307" stop-color="#a4fbb4"/><stop offset="0.488" stop-color="#b1ffb1"/><stop offset="0.5452" stop-color="#b7fba4"/><stop offset="0.6175" stop-color="#b7ef8d"/><stop offset="0.994" stop-color="#ac9d00"/><stop offset="1" stop-color="#ac9c00"/></linearGradient>
<linearGradient id="g110" gradientUnits="userSpaceOnUse" x1="80" x2="413" y1="0" y2="0"><stop offset="0" stop-color="#049b90"/><stop offset="0.3393" stop-color="#87ebb1"/><stop offset="0.4294" stop-color="#a5fbb5"/><stop offset="0.4865" stop-color="#b3ffb2"/><stop offset="0.5435" stop-color="#b8fba5"/><stop offset="0.6156" stop-color="#b9ef8f"/><stop offset="0.994" stop-color="#ad9c00"/><stop offset="1" stop-color="#ad9b00"/></linearGradient>
<linearGradient id="g111" gradientUnits="userSpaceOnUse" x1="80" x2="415" y1="0" y2="0"><stop offset="0" stop-color="#049a91"/><stop offset="0.3403" stop-color="#88eab2"/><stop offset="0.4299" stop-color="#a6fab6"/><stop offset="0.4866" stop-color="#b4ffb3"/><stop offset="0.5433" stop-color="#b9fba7"/><stop offset="0.6119" stop-color="#baef91"/><stop offset="1" stop-color="#ae9a00"/></linearGradient>
<linearGradient id="g112" gradientUnits="userSpaceOnUse" x1="80" x2="417" y1="0" y2="0"><stop offset="0" stop-color="#049a92"/><stop offset="0.3442" stop-color="#8aebb4"/><stop offset="0.4332" stop-color="#a9fbb8"/><stop offset="0.4896" stop-color="#b6ffb4"/><stop offset="0.546" stop-color="#bbfaa7"/><stop offset="0.6142" stop-color="#bbef91"/><stop offset="1" stop-color="#af9a00"/></linearGradient>
<linearGradient id="g113" gradientUnits="userSpaceOnUse" x1="80" x2="419" y1="0" y2="0"><stop offset="0" stop-color="#049993"/><stop offset="0.0059" stop-color="#059993"/><stop offset="0.3451" stop-color="#8cebb5"/><stop offset="0.4336" stop-color="#aafbb9"/><stop offset="0.4897" stop-color="#b7ffb6"/><stop offset="0.5457" stop-color="#bcfaa9"/><stop offset="0.6136" stop-color="#bcef92"/><stop offset="1" stop-color="#b09900"/></linearGradient>
<linearGradient id="g114" gradientUnits="userSpaceOnUse" x1="80" x2="421" y1="0" y2="0"><stop offset="0" stop-color="#049894"/><stop offset="0.0059" stop-color="#049893"/><stop offset="0.346" stop-color="#8debb6"/><stop offset="0.434" stop-color="#abfbba"/><stop offset="0.4897" stop-color="#b9ffb7"/><stop offset="0.5425" stop-color="#bdfbab"/><stop offset="0.61" stop-color="#beef95"/><stop offset="1" stop-color="#b19800"/></linearGradient>
<linearGradient id="g115" gradientUnits="userSpaceOnUse" x1="81" x2="423" y1="0" y2="0"><stop offset="0" stop-color="#049794"/><stop offset="0.345" stop-color="#8eeab7"/><stop offset="0.4327" stop-color="#acfbbc"/><stop offset="0.4883" stop-color="#baffb8"/><stop offset="0.5409" stop-color="#befbac"/><stop offset="0.6082" stop-color="#bfef96"/><stop offset="1" stop-color="#b29700"/></linearGradient>
<linearGradient id="g116" gradientUnits="userSpaceOnUse" x1="81" x2="425" y1="0" y2="0"><stop offset="0" stop-color="#059695"/><stop offset="0.3459" stop-color="#8feab8"/><stop offset="0.4331" stop-color="#aefbbd"/><stop offset="0.4884" stop-color="#bbffba"/><stop offset="0.5407" stop-color="#c0fbad"/><stop offset="0.6076" stop-color="#c0ef97"/><stop offset="1" stop-color="#b39600"/></linearGradient>
<linearGradient id="g117" gradientUnits="userSpaceOnUse" x1="81" x2="427" y1="0" y2="0"><stop offset="0" stop-color="#059596"/><stop offset="0.3468" stop-color="#90eab9"/><stop offset="0.4335" stop-color="#affabe"/><stop offset="0.4884" stop-color="#bdffbb"/><stop offset="0.5405" stop-color="#c1faaf"/><stop offset="0.6069" stop-color="#c1ef98"/><stop offset="1" stop-color="#b49500"/></linearGradient>
<linearGradient id="g118" gradientUnits="userSpaceOnUse" x1="81" x2="429" y1="0" y2="0"><stop offset="0" stop-color="#059497"/><stop offset="0.0057" stop-color="#059596"/><stop offset="0.3506" stop-color="#93eabb"/><stop offset="0.4368" stop-color="#b1fbbf"/><stop offset="0.4885" stop-color="#beffbc"/><stop offset="0.5402" stop-color="#c2fab0"/><stop offset="0.6063" stop-color="#c2ef9a"/><stop offset="1" stop-color="#b59400"/></linearGradient>
<linearGradient id="g119" gradientUnits="userSpaceOnUse" x1="82" x2="431" y1="0" y2="0"><stop offset="0" stop-color="#059397"/><stop offset="0.3467" stop-color="#93eabc"/><stop offset="0.4327" stop-color="#b1fac1"/><stop offset="0.4871" stop-color="#bfffbe"/><stop offset="0.5387" stop-color="#c4fab1"/><stop offset="0.6046" stop-color="#c4ee9b"/><stop offset="1" stop-color="#b69300"/></linearGradient>
<linearGradient id="g120" gradientUnits="userSpaceOnUse" x1="82" x2="433" y1="0" y2="0"><stop offset="0" stop-color="#059298"/><stop offset="0.3476" stop-color="#94e9bd"/><stop offset="0.433" stop-color="#b3fac2"/><stop offset="0.4872" stop-color="#c0ffbf"/><stop offset="0.5385" stop-color="#c5fab3"/><stop offset="0.604" stop-color="#c5ee9c"/><stop offset="1" stop-color="#b79200"/></linearGradient>
<linearGradient id="g121" gradientUnits="userSpaceOnUse" x1="82" x2="435" y1="0" y2="0"><stop offset="0" stop-color="#059199"/><stop offset="0.3513" stop-color="#96eabe"/><stop offset="0.4363" stop-color="#b5fbc3"/><stop offset="0.4873" stop-color="#c2ffc1"/><stop offset="0.5354" stop-color="#c6fbb5"/><stop offset="0.6006" stop-color="#c6ef9e"/><stop offset="1" stop-color="#b89100"/></linearGradient>
<linearGradient id="g122" gradientUnits="userSpaceOnUse" x1="82" x2="437" y1="0" y2="0"><stop offset="0" stop-color="#05909a"/><stop offset="0.0056" stop-color="#05919a"/><stop offset="0.3521" stop-color="#97eabf"/><stop offset="0.4366" stop-color="#b6fbc5"/><stop offset="0.4873" stop-color="#c3ffc2"/><stop offset="0.5352" stop-color="#c7fbb6"/><stop offset="0.6" stop-color="#c7efa0"/><stop offset="1" stop-color="#b99100"/></linearGradient>
<linearGradient id="g123" gradientUnits="userSpaceOnUse" x1="83" x2="439" y1="0" y2="0"><stop offset="0" stop-color="#05909b"/><stop offset="0.3511" stop-color="#98e9c1"/><stop offset="0.4354" stop-color="#b7fac6"/><stop offset="0.486" stop-color="#c4ffc3"/><stop offset="0.5337" stop-color="#c8fbb8"/><stop offset="0.5983" stop-color="#c8eea1"/><stop offset="1" stop-color="#ba9000"/></linearGradient>
<linearGradient id="g124" gradientUnits="userSpaceOnUse" x1="83" x2="441" y1="0" y2="0"><stop offset="0" stop-color="#068f9b"/><stop offset="0.352" stop-color="#99e9c2"/><stop offset="0.4358" stop-color="#b8fac7"/><stop offset="0.486" stop-color="#c6ffc5"/><stop offset="0.5335" stop-color="#cafbb9"/><stop offset="0.5978" stop-color="#caeea2"/><stop offset="1" stop-color="#bb8f00"/></linearGradient>
<linearGradient id="g125" gradientUnits="userSpaceOnUse" x1="83" x2="443" y1="0" y2="0"><stop offset="0" stop-color="#068e9c"/><stop offset="0.3528" stop-color="#9be9c3"/><stop offset="0.4361" stop-color="#bafac8"/><stop offset="0.4861" stop-color="#c7ffc6"/><stop offset="0.5333" stop-color="#cbfbba"/><stop offset="0.5972" stop-color="#cbeea3"/><stop offset="1" stop-color="#bd8e00"/></linearGradient>
<linearGradient id="g126" gradientUnits="userSpaceOnUse" x1="83" x2="446" y1="0" y2="0"><stop offset="0" stop-color="#068d9d"/><stop offset="0.0055" stop-color="#068d9d"/><stop offset="0.3554" stop-color="#9de9c4"/><stop offset="0.4353" stop-color="#bbfaca"/><stop offset="0.4848" stop-color="#c8ffc7"/><stop offset="0.5289" stop-color="#ccfbbc"/><stop offset="0.5895" stop-color="#ccefa7"/><stop offset="0.9945" stop-color="#bd8d00"/><stop offset="1" stop-color="#be8d00"/></linearGradient>
<linearGradient id="g127" gradientUnits="userSpaceOnUse" x1="84" x2="448" y1="0" y2="0"><stop offset="0" stop-color="#068c9e"/><stop offset="0.3516" stop-color="#9de9c5"/><stop offset="0.4341" stop-color="#bcfacb"/><stop offset="0.4835" stop-color="#caffc9"/><stop offset="0.5275" stop-color="#cdfbbe"/><stop offset="0.5879" stop-color="#cdefa8"/><stop offset="0.9945" stop-color="#be8c00"/><stop offset="1" stop-color="#bf8c00"/></linearGradient>
<linearGradient id="g128" gradientUnits="userSpaceOnUse" x1="84" x2="450" y1="0" y2="0"><stop offset="0" stop-color="#068b9e"/><stop offset="0.3525" stop-color="#9ee8c6"/><stop offset="0.4344" stop-color="#bdfacc"/><stop offset="0.4836" stop-color="#cbffca"/><stop offset="0.5273" stop-color="#cffbbf"/><stop offset="0.5874" stop-color="#ceefa9"/><stop offset="1" stop-color="#c08b00"/></linearGradient>
<linearGradient id="g129" gradientUnits="userSpaceOnUse" x1="84" x2="452" y1="0" y2="0"><stop offset="0" stop-color="#068a9f"/><stop offset="0.0054" stop-color="#078b9f"/><stop offset="0.356" stop-color="#a0e9c8"/><stop offset="0.4375" stop-color="#c0face"/><stop offset="0.4837" stop-color="#ccffcb"/><stop offset="0.5272" stop-color="#d0fbc0"/><stop offset="0.587" stop-color="#d0efaa"/><stop offset="1" stop-color="#c18a00"/></linearGradient>
<linearGradient id="g130" gradientUnits="userSpaceOnUse" x1="84" x2="454" y1="0" y2="0"><stop offset="0" stop-color="#0689a0"/><stop offset="0.0054" stop-color="#0689a0"/><stop offset="0.3568" stop-color="#a1e9c9"/><stop offset="0.4378" stop-color="#c1facf"/><stop offset="0.4838" stop-color="#ceffcd"/><stop offset="0.527" stop-color="#d1fbc2"/><stop offset="0.5838" stop-color="#d1efad"/><stop offset="1" stop-color="#c28900"/></linearGradient>
<linearGradient id="g131" gradientUnits="userSpaceOnUse" x1="85" x2="456" y1="0" y2="0"><stop offset="0" stop-color="#0788a1"/><stop offset="0.3558" stop-color="#a2e8ca"/><stop offset="0.4367" stop-color="#c2fad0"/><stop offset="0.4825" stop-color="#cfffce"/><stop offset="0.5229" stop-color="#d2fbc4"/><stop offset="0.5822" stop-color="#d2efae"/><stop offset="1" stop-color="#c38800"/></linearGradient>
<linearGradient id="g132" gradientUnits="userSpaceOnUse" x1="85" x2="458" y1="0" y2="0"><stop offset="0" stop-color="#0787a2"/><stop offset="0.3566" stop-color="#a4e8cb"/><stop offset="0.437" stop-color="#c3fad1"/><stop offset="0.4826" stop-color="#d0ffd0"/><stop offset="0.5228" stop-color="#d4fbc5"/><stop offset="0.5818" stop-color="#d3efaf"/><stop offset="1" stop-color="#c48700"/></linearGradient>
<linearGradient id="g133" gradientUnits="userSpaceOnUse" x1="85" x2="460" y1="0" y2="0"><stop offset="0" stop-color="#0786a2"/><stop offset="0.0053" stop-color="#0787a2"/><stop offset="0.3573" stop-color="#a5e8cc"/><stop offset="0.4373" stop-color="#c4fad2"/><stop offset="0.4827" stop-color="#d2ffd1"/><stop offset="0.5227" stop-color="#d5fbc6"/><stop offset="0.5813" stop-color="#d4efb0"/><stop offset="1" stop-color="#c58700"/></linearGradient>
<linearGradient id="g134" gradientUnits="userSpaceOnUse" x1="86" x2="462" y1="0" y2="0"><stop offset="0" stop-color="#0786a3"/><stop offset="0.3564" stop-color="#a6e8cd"/><stop offset="0.4362" stop-color="#c6fad4"/><stop offset="0.4814" stop-color="#d3ffd2"/><stop offset="0.5213" stop-color="#d6fbc8"/><stop offset="0.5798" stop-color="#d5efb2"/><stop offset="1" stop-color="#c68600"/></linearGradient>
<linearGradient id="g135" gradientUnits="userSpaceOnUse" x1="86" x2="464" y1="0" y2="0"><stop offset="0" stop-color="#0785a4"/><stop offset="0.3598" stop-color="#a8e8cf"/><stop offset="0.4365" stop-color="#c7fad5"/><stop offset="0.4815" stop-color="#d4ffd4"/><stop offset="0.5212" stop-color="#d7fbc9"/><stop offset="0.5794" stop-color="#d7efb3"/><stop offset="1" stop-color="#c78500"/></linearGradient>
<linearGradient id="g136" gradientUnits="userSpaceOnUse" x1="86" x2="466" y1="0" y2="0"><stop offset="0" stop-color="#0784a5"/><stop offset="0.0053" stop-color="#0884a4"/><stop offset="0.3605" stop-color="#a9e8d0"/><stop offset="0.4368" stop-color="#c8fad6"/><stop offset="0.4816" stop-color="#d5ffd5"/><stop offset="0.5211" stop-color="#d9fbca"/><stop offset="0.5789" stop-color="#d8eeb4"/><stop offset="1" stop-color="#c88400"/></linearGradient>
<linearGradient id="g137" gradientUnits="userSpaceOnUse" x1="86" x2="468" y1="0" y2="0"><stop offset="0" stop-color="#0783a5"/><stop offset="0.0079" stop-color="#0984a5"/><stop offset="0.3639" stop-color="#abe8d1"/><stop offset="0.4398" stop-color="#cafad8"/><stop offset="0.4817" stop-color="#d7ffd6"/><stop offset="0.5209" stop-color="#dafbcc"/><stop offset="0.5785" stop-color="#d9eeb5"/><stop offset="1" stop-color="#c98300"/></linearGradient>
<linearGradient id="g138" gradientUnits="userSpaceOnUse" x1="87" x2="470" y1="0" y2="0"><stop offset="0" stop-color="#0882a6"/><stop offset="0.3603" stop-color="#abe7d2"/><stop offset="0.436" stop-color="#caf9d9"/><stop offset="0.4804" stop-color="#d8ffd8"/><stop offset="0.5196" stop-color="#dbfbcd"/><stop offset="0.577" stop-color="#daeeb6"/><stop offset="1" stop-color="#ca8200"/></linearGradient>
<linearGradient id="g139" gradientUnits="userSpaceOnUse" x1="87" x2="472" y1="0" y2="0"><stop offset="0" stop-color="#0881a7"/><stop offset="0.3662" stop-color="#afe9d4"/><stop offset="0.4416" stop-color="#cefada"/><stop offset="0.4831" stop-color="#daffd9"/><stop offset="0.5221" stop-color="#dcfacd"/><stop offset="0.5818" stop-color="#dbedb5"/><stop offset="1" stop-color="#cb8100"/></linearGradient>
<linearGradient id="g140" gradientUnits="userSpaceOnUse" x1="87" x2="474" y1="0" y2="0"><stop offset="0" stop-color="#0880a8"/><stop offset="0.0052" stop-color="#0880a7"/><stop offset="0.3695" stop-color="#b1e9d5"/><stop offset="0.4419" stop-color="#cffadb"/><stop offset="0.4832" stop-color="#dbffda"/><stop offset="0.5194" stop-color="#defbcf"/><stop offset="0.5788" stop-color="#dcedb8"/><stop offset="1" stop-color="#cc8000"/></linearGradient>
<linearGradient id="g141" gradientUnits="userSpaceOnUse" x1="88" x2="476" y1="0" y2="0"><stop offset="0" stop-color="#087fa8"/><stop offset="0.366" stop-color="#b1e8d6"/><stop offset="0.4407" stop-color="#d0fadd"/><stop offset="0.482" stop-color="#dcffdb"/><stop offset="0.518" stop-color="#dffbd1"/><stop offset="0.5773" stop-color="#ddedb9"/><stop offset="1" stop-color="#cd7f00"/></linearGradient>
<linearGradient id="g142" gradientUnits="userSpaceOnUse" x1="88" x2="479" y1="0" y2="0"><stop offset="0" stop-color="#087ea9"/><stop offset="0.3657" stop-color="#b2e8d7"/><stop offset="0.4399" stop-color="#d1fade"/><stop offset="0.4808" stop-color="#deffdd"/><stop offset="0.5141" stop-color="#e0fbd3"/><stop offset="0.5703" stop-color="#dfeebc"/><stop offset="0.9949" stop-color="#ce7f00"/><stop offset="1" stop-color="#ce7e00"/></linearGradient>
<linearGradient id="g143" gradientUnits="userSpaceOnUse" x1="88" x2="481" y1="0" y2="0"><stop offset="0" stop-color="#087daa"/><stop offset="0.0051" stop-color="#087eaa"/><stop offset="0.369" stop-color="#b4e8d8"/><stop offset="0.4427" stop-color="#d3fadf"/><stop offset="0.4809" stop-color="#dfffde"/><stop offset="0.514" stop-color="#e1fbd4"/><stop offset="0.57" stop-color="#e0eebd"/><stop offset="0.9949" stop-color="#cf7e00"/><stop offset="1" stop-color="#d07d00"/></linearGradient>
<linearGradient id="g144" gradientUnits="userSpaceOnUse" x1="89" x2="483" y1="0" y2="0"><stop offset="0" stop-color="#097dab"/><stop offset="0.3655" stop-color="#b4e7d9"/><stop offset="0.4416" stop-color="#d5fae0"/><stop offset="0.4797" stop-color="#e0ffdf"/><stop offset="0.5127" stop-color="#e2fbd5"/><stop offset="0.5685" stop-color="#e1eebf"/><stop offset="1" stop-color="#d17d00"/></linearGradient>
<linearGradient id="g145" gradientUnits="userSpaceOnUse" x1="89" x2="485" y1="0" y2="0"><stop offset="0" stop-color="#097cab"/><stop offset="0.3687" stop-color="#b6e8da"/><stop offset="0.4419" stop-color="#d6fae1"/><stop offset="0.4798" stop-color="#e1ffe1"/><stop offset="0.5126" stop-color="#e4fbd7"/><stop offset="0.5682" stop-color="#e2eec0"/><stop offset="1" stop-color="#d27c00"/></linearGradient>
<linearGradient id="g146" gradientUnits="userSpaceOnUse" x1="89" x2="487" y1="0" y2="0"><stop offset="0" stop-color="#097bac"/><stop offset="0.005" stop-color="#097bac"/><stop offset="0.3719" stop-color="#b8e8dc"/><stop offset="0.4422" stop-color="#d7fae3"/><stop offset="0.4799" stop-color="#e3ffe2"/><stop offset="0.5126" stop-color="#e5fbd8"/><stop offset="0.5729" stop-color="#e3ecbf"/><stop offset="1" stop-color="#d37b00"/></linearGradient>
<linearGradient id="g147" gradientUnits="userSpaceOnUse" x1="90" x2="489" y1="0" y2="0"><stop offset="0" stop-color="#097aad"/><stop offset="0.3659" stop-color="#b7e6dc"/><stop offset="0.4411" stop-color="#d8fae4"/><stop offset="0.4787" stop-color="#e4ffe3"/><stop offset="0.5113" stop-color="#e6fbd9"/><stop offset="0.5764" stop-color="#e4ebbe"/><stop offset="1" stop-color="#d47a00"/></linearGradient>
<linearGradient id="g148" gradientUnits="userSpaceOnUse" x1="90" x2="491" y1="0" y2="0"><stop offset="0" stop-color="#0979ae"/><stop offset="0.3691" stop-color="#b9e7dd"/><stop offset="0.4439" stop-color="#dafae5"/><stop offset="0.4788" stop-color="#e5ffe5"/><stop offset="0.5112" stop-color="#e7fada"/><stop offset="0.5786" stop-color="#e5eabe"/><stop offset="1" stop-color="#d57900"/></linearGradient>
<linearGradient id="g149" gradientUnits="userSpaceOnUse" x1="90" x2="493" y1="0" y2="0"><stop offset="0" stop-color="#0978ae"/><stop offset="0.005" stop-color="#0a78ae"/><stop offset="0.3722" stop-color="#bce7df"/><stop offset="0.4442" stop-color="#dbfae6"/><stop offset="0.4789" stop-color="#e7ffe6"/><stop offset="0.5112" stop-color="#e8fadc"/><stop offset="0.5806" stop-color="#e6e9be"/><stop offset="1" stop-color="#d67800"/></linearGradient>
<linearGradient id="g150" gradientUnits="userSpaceOnUse" x1="91" x2="495" y1="0" y2="0"><stop offset="0" stop-color="#0a77af"/><stop offset="0.3688" stop-color="#bbe6df"/><stop offset="0.4431" stop-color="#dcfae7"/><stop offset="0.4777" stop-color="#e8ffe7"/><stop offset="0.5099" stop-color="#e9fadd"/><stop offset="0.5817" stop-color="#e7e8be"/><stop offset="1" stop-color="#d77700"/></linearGradient>
<linearGradient id="g151" gradientUnits="userSpaceOnUse" x1="91" x2="497" y1="0" y2="0"><stop offset="0" stop-color="#0a76b0"/><stop offset="0.3719" stop-color="#bee7e1"/><stop offset="0.4433" stop-color="#defae9"/><stop offset="0.4778" stop-color="#e9ffe8"/><stop offset="0.5074" stop-color="#ebfbdf"/><stop offset="0.5837" stop-color="#e8e7be"/><stop offset="1" stop-color="#d87600"/></linearGradient>
<linearGradient id="g152" gradientUnits="userSpaceOnUse" x1="91" x2="499" y1="0" y2="0"><stop offset="0" stop-color="#0a75b1"/><stop offset="0.0049" stop-color="#0a75b0"/><stop offset="0.375" stop-color="#c0e7e2"/><stop offset="0.4461" stop-color="#e0faea"/><stop offset="0.4779" stop-color="#eaffea"/><stop offset="0.5074" stop-color="#ecfbe0"/><stop offset="0.5882" stop-color="#e9e6bd"/><stop offset="1" stop-color="#d97500"/></linearGradient>
<linearGradient id="g153" gradientUnits="userSpaceOnUse" x1="92" x2="501" y1="0" y2="0"><stop offset="0" stop-color="#0a74b1"/><stop offset="0.3692" stop-color="#bee5e3"/><stop offset="0.4425" stop-color="#e0faeb"/><stop offset="0.4768" stop-color="#ecffeb"/><stop offset="0.5061" stop-color="#edfae1"/><stop offset="0.5917" stop-color="#eae4bc"/><stop offset="1" stop-color="#da7400"/></linearGradient>
<linearGradient id="g154" gradientUnits="userSpaceOnUse" x1="92" x2="503" y1="0" y2="0"><stop offset="0" stop-color="#0a73b2"/><stop offset="0.3723" stop-color="#c1e6e4"/><stop offset="0.4453" stop-color="#e2faec"/><stop offset="0.4769" stop-color="#edffec"/><stop offset="0.5061" stop-color="#eefae3"/><stop offset="0.5985" stop-color="#ebe2ba"/><stop offset="1" stop-color="#db7400"/></linearGradient>
<linearGradient id="g155" gradientUnits="userSpaceOnUse" x1="92" x2="505" y1="0" y2="0"><stop offset="0" stop-color="#0b73b3"/><stop offset="0.0048" stop-color="#0a73b3"/><stop offset="0.3729" stop-color="#c2e6e5"/><stop offset="0.4455" stop-color="#e3faed"/><stop offset="0.477" stop-color="#eeffee"/><stop offset="0.5061" stop-color="#effae4"/><stop offset="0.6005" stop-color="#ece2ba"/><stop offset="1" stop-color="#dc7300"/></linearGradient>
<linearGradient id="g156" gradientUnits="userSpaceOnUse" x1="93" x2="507" y1="0" y2="0"><stop offset="0" stop-color="#0b72b3"/><stop offset="0.3623" stop-color="#bee2e5"/><stop offset="0.442" stop-color="#e3f9ee"/><stop offset="0.4758" stop-color="#efffef"/><stop offset="0.5048" stop-color="#f0fae5"/><stop offset="0.6087" stop-color="#ecdfb7"/><stop offset="1" stop-color="#dd7200"/></linearGradient>
<linearGradient id="g157" gradientUnits="userSpaceOnUse" x1="93" x2="509" y1="0" y2="0"><stop offset="0" stop-color="#0b71b4"/><stop offset="0.0048" stop-color="#0b71b4"/><stop offset="0.3654" stop-color="#c0e3e6"/><stop offset="0.4447" stop-color="#e5f9f0"/><stop offset="0.476" stop-color="#f1fff0"/><stop offset="0.5072" stop-color="#f1f9e5"/><stop offset="0.6154" stop-color="#edddb4"/><stop offset="1" stop-color="#de7100"/></linearGradient>
<linearGradient id="g158" gradientUnits="userSpaceOnUse" x1="93" x2="511" y1="0" y2="0"><stop offset="0" stop-color="#0b70b5"/><stop offset="0.0072" stop-color="#0c71b5"/><stop offset="0.3708" stop-color="#c3e4e7"/><stop offset="0.4474" stop-color="#e7faf1"/><stop offset="0.4761" stop-color="#f2fff2"/><stop offset="0.5072" stop-color="#f2f9e6"/><stop offset="0.622" stop-color="#eedab2"/><stop offset="1" stop-color="#df7000"/></linearGradient>
<linearGradient id="g159" gradientUnits="userSpaceOnUse" x1="94" x2="514" y1="0" y2="0"><stop offset="0" stop-color="#0b6fb6"/><stop offset="0.3571" stop-color="#bfe0e7"/><stop offset="0.4429" stop-color="#e7f9f2"/><stop offset="0.4738" stop-color="#f3fff3"/><stop offset="0.6048" stop-color="#f0deba"/><stop offset="0.9952" stop-color="#e06f00"/><stop offset="1" stop-color="#e06f00"/></linearGradient>
<linearGradient id="g160" gradientUnits="userSpaceOnUse" x1="94" x2="516" y1="0" y2="0"><stop offset="0" stop-color="#0b6eb6"/><stop offset="0.0047" stop-color="#0c6eb6"/><stop offset="0.3602" stop-color="#c1e0e8"/><stop offset="0.4431" stop-color="#e8f9f3"/><stop offset="0.4739" stop-color="#f4fff4"/><stop offset="0.609" stop-color="#f0ddb9"/><stop offset="0.9953" stop-color="#e16e00"/><stop offset="1" stop-color="#e16e00"/></linearGradient>
<linearGradient id="g161" gradientUnits="userSpaceOnUse" x1="95" x2="518" y1="0" y2="0"><stop offset="0" stop-color="#0c6db7"/><stop offset="0.3499" stop-color="#bddde8"/><stop offset="0.4421" stop-color="#e9f9f4"/><stop offset="0.4728" stop-color="#f6fff5"/><stop offset="0.6099" stop-color="#f1dcb9"/><stop offset="1" stop-color="#e26d00"/></linearGradient>
<linearGradient id="g162" gradientUnits="userSpaceOnUse" x1="95" x2="520" y1="0" y2="0"><stop offset="0" stop-color="#0c6cb8"/><stop offset="0.3506" stop-color="#bedde9"/><stop offset="0.4729" stop-color="#f7fff7"/><stop offset="0.6141" stop-color="#f2dab8"/><stop offset="1" stop-color="#e36c00"/></linearGradient>
<linearGradient id="g163" gradientUnits="userSpaceOnUse" x1="95" x2="522" y1="0" y2="0"><stop offset="0" stop-color="#0c6bb9"/><stop offset="0.0047" stop-color="#0c6bb8"/><stop offset="0.3583" stop-color="#c2deeb"/><stop offset="0.4731" stop-color="#f8fff8"/><stop offset="0.6206" stop-color="#f3d8b6"/><stop offset="1" stop-color="#e46b00"/></linearGradient>
<linearGradient id="g164" gradientUnits="userSpaceOnUse" x1="96" x2="524" y1="0" y2="0"><stop offset="0" stop-color="#0c6ab9"/><stop offset="0.3411" stop-color="#bbd9e9"/><stop offset="0.472" stop-color="#f9fff9"/><stop offset="0.6262" stop-color="#f4d6b4"/><stop offset="1" stop-color="#e56a00"/></linearGradient>
<linearGradient id="g165" gradientUnits="userSpaceOnUse" x1="96" x2="526" y1="0" y2="0"><stop offset="0" stop-color="#0c6aba"/><stop offset="0.0047" stop-color="#0d6aba"/><stop offset="0.3419" stop-color="#bcd8ea"/><stop offset="0.4721" stop-color="#fafffa"/><stop offset="0.6302" stop-color="#f5d5b3"/><stop offset="1" stop-color="#e66a00"/></linearGradient>
<linearGradient id="g166" gradientUnits="userSpaceOnUse" x1="97" x2="528" y1="0" y2="0"><stop offset="0" stop-color="#0d69bb"/><stop offset="0.3318" stop-color="#b8d5ea"/><stop offset="0.471" stop-color="#fcfffc"/><stop offset="0.6311" stop-color="#f6d4b3"/><stop offset="1" stop-color="#e86900"/></linearGradient>
<linearGradient id="g167" gradientUnits="userSpaceOnUse" x1="97" x2="530" y1="0" y2="0"><stop offset="0" stop-color="#0d68bb"/><stop offset="0.3326" stop-color="#b9d5eb"/><stop offset="0.4711" stop-color="#fdfffd"/><stop offset="0.6374" stop-color="#f7d2b1"/><stop offset="1" stop-color="#e96800"/></linearGradient>
<linearGradient id="g168" gradientUnits="userSpaceOnUse" x1="97" x2="532" y1="0" y2="0"><stop offset="0" stop-color="#0d67bc"/><stop offset="0.0046" stop-color="#0d67bc"/><stop offset="0.3356" stop-color="#bbd5ec"/><stop offset="0.4713" stop-color="#fefffe"/><stop offset="0.6391" stop-color="#f8d1b1"/><stop offset="1" stop-color="#ea6700"/></linearGradient>
<linearGradient id="g169" gradientUnits="userSpaceOnUse" x1="98" x2="534" y1="0" y2="0"><stop offset="0" stop-color="#0d66bd"/><stop offset="0.3211" stop-color="#b5d0eb"/><stop offset="0.4702" stop-color="#ffffff"/><stop offset="0.6376" stop-color="#f9d1b2"/><stop offset="1" stop-color="#eb6600"/></linearGradient>
<linearGradient id="g170" gradientUnits="userSpaceOnUse" x1="98" x2="536" y1="0" y2="0"><stop offset="0" stop-color="#0d65be"/><stop offset="0.0046" stop-color="#0e65be"/><stop offset="0.3288" stop-color="#bad2ed"/><stop offset="0.4658" stop-color="#fdfdff"/><stop offset="0.5" stop-color="#fff7f4"/><stop offset="0.5936" stop-color="#fcddc8"/><stop offset="1" stop-color="#ec6500"/></linearGradient>
<linearGradient id="g171" gradientUnits="userSpaceOnUse" x1="98" x2="538" y1="0" y2="0"><stop offset="0" stop-color="#0e64be"/><stop offset="0.0068" stop-color="#0f65bf"/><stop offset="0.3341" stop-color="#bdd3ee"/><stop offset="0.4614" stop-color="#fcfbff"/><stop offset="0.525" stop-color="#fff0e9"/><stop offset="0.5636" stop-color="#fee5d7"/><stop offset="1" stop-color="#ed6400"/></linearGradient>
<linearGradient id="g172" gradientUnits="userSpaceOnUse" x1="99" x2="540" y1="0" y2="0"><stop offset="0" stop-color="#0e63bf"/><stop offset="0.3243" stop-color="#b9d0ee"/><stop offset="0.4558" stop-color="#faf9ff"/><stop offset="0.5488" stop-color="#ffe9df"/><stop offset="1" stop-color="#ee6300"/></linearGradient>
<linearGradient id="g173" gradientUnits="userSpaceOnUse" x1="99" x2="542" y1="0" y2="0"><stop offset="0" stop-color="#0e62c0"/><stop offset="0.0045" stop-color="#0e62c0"/><stop offset="0.3318" stop-color="#bdd1f0"/><stop offset="0.4515" stop-color="#f9f7ff"/><stop offset="0.5734" stop-color="#ffe2d4"/><stop offset="1" stop-color="#ef6200"/></linearGradient>
<linearGradient id="g174" gradientUnits="userSpaceOnUse" x1="100" x2="544" y1="0" y2="0"><stop offset="0" stop-color="#0e61c0"/><stop offset="0.3176" stop-color="#b7ccee"/><stop offset="0.4459" stop-color="#f7f5ff"/><stop offset="0.5968" stop-color="#ffdac9"/><stop offset="1" stop-color="#f06100"/></linearGradient>
<linearGradient id="g175" gradientUnits="userSpaceOnUse" x1="100" x2="547" y1="0" y2="0"><stop offset="0" stop-color="#0e60c1"/><stop offset="0.0045" stop-color="#0f61c1"/><stop offset="0.3244" stop-color="#bccef0"/><stop offset="0.4407" stop-color="#f5f2ff"/><stop offset="0.6197" stop-color="#ffd3be"/><stop offset="0.9955" stop-color="#f16100"/><stop offset="1" stop-color="#f16000"/></linearGradient>
<linearGradient id="g176" gradientUnits="userSpaceOnUse" x1="101" x2="549" y1="0" y2="0"><stop offset="0" stop-color="#0f60c2"/><stop offset="0.3147" stop-color="#b8cbf0"/><stop offset="0.4353" stop-color="#f4f0ff"/><stop offset="0.6429" stop-color="#ffcbb3"/><stop offset="1" stop-color="#f26000"/></linearGradient>
<linearGradient id="g177" gradientUnits="userSpaceOnUse" x1="101" x2="551" y1="0" y2="0"><stop offset="0" stop-color="#0f5fc2"/><stop offset="0.0044" stop-color="#0f5fc3"/><stop offset="0.32" stop-color="#bbccf1"/><stop offset="0.4311" stop-color="#f2eefe"/><stop offset="0.6667" stop-color="#ffc4a8"/><stop offset="1" stop-color="#f35f00"/></linearGradient>
<linearGradient id="g178" gradientUnits="userSpaceOnUse" x1="101" x2="553" y1="0" y2="0"><stop offset="0" stop-color="#0f5ec3"/><stop offset="0.0066" stop-color="#105ec4"/><stop offset="0.323" stop-color="#bdccf2"/><stop offset="0.427" stop-color="#f0ecfe"/><stop offset="0.6903" stop-color="#ffbc9d"/><stop offset="1" stop-color="#f45e00"/></linearGradient>
<linearGradient id="g179" gradientUnits="userSpaceOnUse" x1="102" x2="555" y1="0" y2="0"><stop offset="0" stop-color="#0f5dc4"/><stop offset="0.3113" stop-color="#b8c8f2"/><stop offset="0.4216" stop-color="#efeafe"/><stop offset="0.7152" stop-color="#ffb491"/><stop offset="1" stop-color="#f55d00"/></linearGradient>
<linearGradient id="g180" gradientUnits="userSpaceOnUse" x1="102" x2="557" y1="0" y2="0"><stop offset="0" stop-color="#105cc5"/><stop offset="0.0044" stop-color="#105cc5"/><stop offset="0.3143" stop-color="#bac8f3"/><stop offset="0.4176" stop-color="#ede8fe"/><stop offset="0.7385" stop-color="#ffad86"/><stop offset="1" stop-color="#f65c00"/></linearGradient>
<linearGradient id="g181" gradientUnits="userSpaceOnUse" x1="103" x2="559" y1="0" y2="0"><stop offset="0" stop-color="#105bc5"/><stop offset="0.3048" stop-color="#b6c5f2"/><stop offset="0.4123" stop-color="#ebe6fe"/><stop offset="0.761" stop-color="#ffa57b"/><stop offset="1" stop-color="#f75b00"/></linearGradient>
<linearGradient id="g182" gradientUnits="userSpaceOnUse" x1="103" x2="561" y1="0" y2="0"><stop offset="0" stop-color="#105ac6"/><stop offset="0.0044" stop-color="#105ac6"/><stop offset="0.3057" stop-color="#b7c4f3"/><stop offset="0.4083" stop-color="#eae3fe"/><stop offset="0.7838" stop-color="#ff9d70"/><stop offset="1" stop-color="#f85a00"/></linearGradient>
<linearGradient id="g183" gradientUnits="userSpaceOnUse" x1="104" x2="563" y1="0" y2="0"><stop offset="0" stop-color="#1059c7"/><stop offset="0.2963" stop-color="#b3c0f3"/><stop offset="0.4031" stop-color="#e8e1fe"/><stop offset="0.8061" stop-color="#ff9664"/><stop offset="1" stop-color="#f95900"/></linearGradient>
<linearGradient id="g184" gradientUnits="userSpaceOnUse" x1="104" x2="565" y1="0" y2="0"><stop offset="0" stop-color="#1058c7"/><stop offset="0.0043" stop-color="#1158c8"/><stop offset="0.2972" stop-color="#b4c0f3"/><stop offset="0.3991" stop-color="#e6dffe"/><stop offset="0.8286" stop-color="#ff8e59"/><stop offset="1" stop-color="#fa5800"/></linearGradient>
<linearGradient id="g185" gradientUnits="userSpaceOnUse" x1="104" x2="567" y1="0" y2="0"><stop offset="0" stop-color="#1157c8"/><stop offset="0.0065" stop-color="#1258c8"/><stop offset="0.2981" stop-color="#b4bff4"/><stop offset="0.3952" stop-color="#e5ddfe"/><stop offset="0.8099" stop-color="#ff8e5e"/><stop offset="0.851" stop-color="#ff864e"/><stop offset="1" stop-color="#fb5700"/></linearGradient>
<linearGradient id="g186" gradientUnits="userSpaceOnUse" x1="105" x2="569" y1="0" y2="0"><stop offset="0" stop-color="#1157c9"/><stop offset="0.2888" stop-color="#b1bcf4"/><stop offset="0.3901" stop-color="#e3dafe"/><stop offset="0.8297" stop-color="#ff8754"/><stop offset="0.8728" stop-color="#ff7e42"/><stop offset="1" stop-color="#fc5600"/></linearGradient>
<linearGradient id="g187" gradientUnits="userSpaceOnUse" x1="105" x2="571" y1="0" y2="0"><stop offset="0" stop-color="#1156c9"/><stop offset="0.0064" stop-color="#1256ca"/><stop offset="0.2897" stop-color="#b1bbf4"/><stop offset="0.3863" stop-color="#e1d8fe"/><stop offset="0.8498" stop-color="#ff7f49"/><stop offset="0.8948" stop-color="#ff7737"/><stop offset="1" stop-color="#fe5600"/></linearGradient>
<linearGradient id="g188" gradientUnits="userSpaceOnUse" x1="106" x2="573" y1="0" y2="0"><stop offset="0" stop-color="#1155ca"/><stop offset="0.2784" stop-color="#acb7f3"/><stop offset="0.3812" stop-color="#e0d6fe"/><stop offset="0.8694" stop-color="#ff783f"/><stop offset="0.9165" stop-color="#ff6f2c"/><stop offset="1" stop-color="#ff5500"/></linearGradient>
<linearGradient id="g189" gradientUnits="userSpaceOnUse" x1="106" x2="575" y1="0" y2="0"><stop offset="0" stop-color="#1254cb"/><stop offset="0.0064" stop-color="#1354cb"/><stop offset="0.2814" stop-color="#aeb7f4"/><stop offset="0.3774" stop-color="#ded4fe"/><stop offset="0.5949" stop-color="#ebaaaa"/><stop offset="0.8891" stop-color="#ff7134"/><stop offset="0.9382" stop-color="#ff6720"/><stop offset="1" stop-color="#ff5400"/></linearGradient>
<linearGradient id="g190" gradientUnits="userSpaceOnUse" x1="107" x2="577" y1="0" y2="0"><stop offset="0" stop-color="#1253cc"/><stop offset="0.2723" stop-color="#aab3f4"/><stop offset="0.3723" stop-color="#dcd2fd"/><stop offset="0.6" stop-color="#eaa6a6"/><stop offset="0.9085" stop-color="#ff6929"/><stop offset="0.9617" stop-color="#ff5f14"/><stop offset="1" stop-color="#ff5300"/></linearGradient>
<linearGradient id="g191" gradientUnits="userSpaceOnUse" x1="107" x2="580" y1="0" y2="0"><stop offset="0" stop-color="#1252cc"/><stop offset="0.0042" stop-color="#1252cc"/><stop offset="0.2727" stop-color="#abb3f5"/><stop offset="0.3679" stop-color="#dbcffd"/><stop offset="0.6047" stop-color="#e9a1a1"/><stop offset="0.926" stop-color="#ff621f"/><stop offset="1" stop-color="#ff5200"/></linearGradient>
<linearGradient id="g192" gradientUnits="userSpaceOnUse" x1="108" x2="581" y1="0" y2="0"><stop offset="0" stop-color="#1251cd"/><stop offset="0.2643" stop-color="#a7aff4"/><stop offset="0.3319" stop-color="#cbc6fc"/><stop offset="0.3636" stop-color="#d9cdfd"/><stop offset="0.611" stop-color="#e89d9d"/><stop offset="0.9471" stop-color="#ff5a14"/><stop offset="1" stop-color="#ff5100"/></linearGradient>
<linearGradient id="g193" gradientUnits="userSpaceOnUse" x1="108" x2="579" y1="0" y2="0"><stop offset="0" stop-color="#1350ce"/><stop offset="0.0042" stop-color="#1350ce"/><stop offset="0.2696" stop-color="#a9aff5"/><stop offset="0.3631" stop-color="#d7cbfd"/><stop offset="0.6285" stop-color="#e79796"/><stop offset="0.9894" stop-color="#ff5004"/><stop offset="1" stop-color="#ff5003"/></linearGradient>
<linearGradient id="g194" gradientUnits="userSpaceOnUse" x1="109" x2="574" y1="0" y2="0"><stop offset="0" stop-color="#134fce"/><stop offset="0.2645" stop-color="#a5acf5"/><stop offset="0.329" stop-color="#c6c1fc"/><stop offset="0.3634" stop-color="#d5c9fd"/><stop offset="0.6301" stop-color="#e69697"/><stop offset="0.9892" stop-color="#fd4f07"/><stop offset="1" stop-color="#fe4f06"/></linearGradient>
<linearGradient id="g195" gradientUnits="userSpaceOnUse" x1="109" x2="570" y1="0" y2="0"><stop offset="0" stop-color="#134ecf"/><stop offset="0.0043" stop-color="#134ecf"/><stop offset="0.2711" stop-color="#a7acf5"/><stop offset="0.3644" stop-color="#d4c6fd"/><stop offset="0.6312" stop-color="#e49497"/><stop offset="0.9892" stop-color="#fb4e09"/><stop offset="1" stop-color="#fc4e08"/></linearGradient>
<linearGradient id="g196" gradientUnits="userSpaceOnUse" x1="110" x2="566" y1="0" y2="0"><stop offset="0" stop-color="#134dd0"/><stop offset="0.2654" stop-color="#a3a8f5"/><stop offset="0.3289" stop-color="#c3bcfc"/><stop offset="0.364" stop-color="#d2c4fd"/><stop offset="0.6316" stop-color="#e29298"/><stop offset="0.9868" stop-color="#f94e0d"/><stop offset="1" stop-color="#fa4e0b"/></linearGradient>
<linearGradient id="g197" gradientUnits="userSpaceOnUse" x1="110" x2="561" y1="0" y2="0"><stop offset="0" stop-color="#144dd0"/><stop offset="0.0044" stop-color="#144cd0"/><stop offset="0.2749" stop-color="#a6a9f6"/><stop offset="0.3659" stop-color="#d0c2fd"/><stop offset="0.6341" stop-color="#e09099"/><stop offset="0.9889" stop-color="#f74c0f"/><stop offset="1" stop-color="#f74d0e"/></linearGradient>
<linearGradient id="g198" gradientUnits="userSpaceOnUse" x1="111" x2="557" y1="0" y2="0"><stop offset="0" stop-color="#144cd1"/><stop offset="0.2691" stop-color="#a2a5f6"/><stop offset="0.3296" stop-color="#c0b8fc"/><stop offset="0.3655" stop-color="#cec0fd"/><stop offset="0.6323" stop-color="#de8e9a"/><stop offset="0.9865" stop-color="#f44c12"/><stop offset="1" stop-color="#f54c11"/></linearGradient>
<linearGradient id="g199" gradientUnits="userSpaceOnUse" x1="111" x2="552" y1="0" y2="0"><stop offset="0" stop-color="#144bd2"/><stop offset="0.0045" stop-color="#144bd2"/><stop offset="0.2766" stop-color="#a4a5f7"/><stop offset="0.3673" stop-color="#cdbdfd"/><stop offset="0.6349" stop-color="#dc8c9b"/><stop offset="0.9887" stop-color="#f24b15"/><stop offset="1" stop-color="#f34b14"/></linearGradient>
<linearGradient id="g200" gradientUnits="userSpaceOnUse" x1="112" x2="548" y1="0" y2="0"><stop offset="0" stop-color="#144ad2"/><stop offset="0.2729" stop-color="#a1a2f6"/><stop offset="0.367" stop-color="#cbbbfd"/><stop offset="0.6376" stop-color="#da8a9b"/><stop offset="0.9885" stop-color="#f04a17"/><stop offset="1" stop-color="#f14a16"/></linearGradient>
<linearGradient id="g201" gradientUnits="userSpaceOnUse" x1="112" x2="543" y1="0" y2="0"><stop offset="0" stop-color="#1549d3"/><stop offset="0.0046" stop-color="#1549d3"/><stop offset="0.2784" stop-color="#a1a2f7"/><stop offset="0.3689" stop-color="#c9b9fd"/><stop offset="0.9884" stop-color="#ee491b"/><stop offset="1" stop-color="#ee4919"/></linearGradient>
<linearGradient id="g202" gradientUnits="userSpaceOnUse" x1="113" x2="539" y1="0" y2="0"><stop offset="0" stop-color="#1548d4"/><stop offset="0.2746" stop-color="#9f9ff7"/><stop offset="0.3685" stop-color="#c7b6fd"/><stop offset="0.9883" stop-color="#eb481d"/><stop offset="1" stop-color="#ec481c"/></linearGradient>
<linearGradient id="g203" gradientUnits="userSpaceOnUse" x1="113" x2="535" y1="0" y2="0"><stop offset="0" stop-color="#1547d4"/><stop offset="0.0047" stop-color="#1547d4"/><stop offset="0.2773" stop-color="#9e9df7"/><stop offset="0.3697" stop-color="#c6b4fd"/><stop offset="0.9858" stop-color="#e94720"/><stop offset="1" stop-color="#ea471e"/></linearGradient>
<linearGradient id="g204" gradientUnits="userSpaceOnUse" x1="114" x2="530" y1="0" y2="0"><stop offset="0" stop-color="#1546d5"/><stop offset="0.2788" stop-color="#9e9cf7"/><stop offset="0.3702" stop-color="#c4b2fc"/><stop offset="0.988" stop-color="#e74623"/><stop offset="1" stop-color="#e84621"/></linearGradient>
<linearGradient id="g205" gradientUnits="userSpaceOnUse" x1="114" x2="526" y1="0" y2="0"><stop offset="0" stop-color="#1645d6"/><stop offset="0.0073" stop-color="#1746d6"/><stop offset="0.2791" stop-color="#9c9af7"/><stop offset="0.3714" stop-color="#c2b0fc"/><stop offset="0.9854" stop-color="#e44526"/><stop offset="1" stop-color="#e64624"/></linearGradient>
<linearGradient id="g206" gradientUnits="userSpaceOnUse" x1="115" x2="521" y1="0" y2="0"><stop offset="0" stop-color="#1644d6"/><stop offset="0.2783" stop-color="#9a98f7"/><stop offset="0.3719" stop-color="#c0adfc"/><stop offset="0.9877" stop-color="#e24429"/><stop offset="1" stop-color="#e34527"/></linearGradient>
<linearGradient id="g207" gradientUnits="userSpaceOnUse" x1="115" x2="517" y1="0" y2="0"><stop offset="0" stop-color="#1644d7"/><stop offset="0.0075" stop-color="#1744d7"/><stop offset="0.2786" stop-color="#9995f8"/><stop offset="0.3731" stop-color="#bfabfc"/><stop offset="0.9876" stop-color="#e0432b"/><stop offset="1" stop-color="#e1442a"/></linearGradient>
<linearGradient id="g208" gradientUnits="userSpaceOnUse" x1="116" x2="512" y1="0" y2="0"><stop offset="0" stop-color="#1743d8"/><stop offset="0.2778" stop-color="#9793f8"/><stop offset="0.3737" stop-color="#bda9fc"/><stop offset="0.9874" stop-color="#de432e"/><stop offset="1" stop-color="#df432d"/></linearGradient>
<linearGradient id="g209" gradientUnits="userSpaceOnUse" x1="116" x2="508" y1="0" y2="0"><stop offset="0" stop-color="#1742d8"/><stop offset="0.0077" stop-color="#1842d9"/><stop offset="0.2781" stop-color="#9591f8"/><stop offset="0.375" stop-color="#bba6fc"/><stop offset="0.9872" stop-color="#dc4231"/><stop offset="1" stop-color="#dd422f"/></linearGradient>
<linearGradient id="g210" gradientUnits="userSpaceOnUse" x1="117" x2="504" y1="0" y2="0"><stop offset="0" stop-color="#1741d9"/><stop offset="0.0052" stop-color="#1741d9"/><stop offset="0.2765" stop-color="#948ff8"/><stop offset="0.3747" stop-color="#b9a4fc"/><stop offset="0.9845" stop-color="#d94134"/><stop offset="1" stop-color="#db4132"/></linearGradient>
<linearGradient id="g211" gradientUnits="userSpaceOnUse" x1="118" x2="499" y1="0" y2="0"><stop offset="0" stop-color="#1740d9"/><stop offset="0.2756" stop-color="#928df8"/><stop offset="0.3753" stop-color="#b8a2fc"/><stop offset="0.9869" stop-color="#d74037"/><stop offset="1" stop-color="#d84035"/></linearGradient>
<linearGradient id="g212" gradientUnits="userSpaceOnUse" x1="118" x2="495" y1="0" y2="0"><stop offset="0" stop-color="#183fda"/><stop offset="0.0053" stop-color="#183fda"/><stop offset="0.2759" stop-color="#908af8"/><stop offset="0.3767" stop-color="#b69ffc"/><stop offset="0.9841" stop-color="#d53f3a"/><stop offset="1" stop-color="#d63f38"/></linearGradient>
<linearGradient id="g213" gradientUnits="userSpaceOnUse" x1="119" x2="490" y1="0" y2="0"><stop offset="0" stop-color="#183edb"/><stop offset="0.2749" stop-color="#8f88f8"/><stop offset="0.3774" stop-color="#b49dfc"/><stop offset="0.9865" stop-color="#d23e3c"/><stop offset="1" stop-color="#d43e3b"/></linearGradient>
<linearGradient id="g214" gradientUnits="userSpaceOnUse" x1="119" x2="486" y1="0" y2="0"><stop offset="0" stop-color="#183ddb"/><stop offset="0.0082" stop-color="#193ddc"/><stop offset="0.2752" stop-color="#8d86f8"/><stop offset="0.3787" stop-color="#b29bfc"/><stop offset="0.9864" stop-color="#d03d3f"/><stop offset="1" stop-color="#d23d3d"/></linearGradient>
<linearGradient id="g215" gradientUnits="userSpaceOnUse" x1="120" x2="482" y1="0" y2="0"><stop offset="0" stop-color="#193cdc"/><stop offset="0.2735" stop-color="#8b84f8"/><stop offset="0.3785" stop-color="#b199fc"/><stop offset="0.9834" stop-color="#ce3c42"/><stop offset="1" stop-color="#cf3d40"/></linearGradient>
<linearGradient id="g216" gradientUnits="userSpaceOnUse" x1="121" x2="477" y1="0" y2="0"><stop offset="0" stop-color="#193bdd"/><stop offset="0.2725" stop-color="#8982f8"/><stop offset="0.3792" stop-color="#af96fc"/><stop offset="0.986" stop-color="#cc3b45"/><stop offset="1" stop-color="#cd3c43"/></linearGradient>
<linearGradient id="g217" gradientUnits="userSpaceOnUse" x1="121" x2="473" y1="0" y2="0"><stop offset="0" stop-color="#193bdd"/><stop offset="0.0057" stop-color="#193add"/><stop offset="0.2727" stop-color="#887ff8"/><stop offset="0.3807" stop-color="#ad94fb"/><stop offset="0.983" stop-color="#c93a48"/><stop offset="1" stop-color="#cb3b45"/></linearGradient>
<linearGradient id="g218" gradientUnits="userSpaceOnUse" x1="122" x2="468" y1="0" y2="0"><stop offset="0" stop-color="#1a3ade"/><stop offset="0.2717" stop-color="#867df8"/><stop offset="0.3815" stop-color="#ab92fb"/><stop offset="0.9855" stop-color="#c7394a"/><stop offset="1" stop-color="#c93a48"/></linearGradient>
<linearGradient id="g219" gradientUnits="userSpaceOnUse" x1="122" x2="464" y1="0" y2="0"><stop offset="0" stop-color="#1a39de"/><stop offset="0.0088" stop-color="#1b39df"/><stop offset="0.2719" stop-color="#847bf8"/><stop offset="0.383" stop-color="#aa8ffb"/><stop offset="0.9854" stop-color="#c5384d"/><stop offset="1" stop-color="#c6394b"/></linearGradient>
<linearGradient id="g220" gradientUnits="userSpaceOnUse" x1="123" x2="459" y1="0" y2="0"><stop offset="0" stop-color="#1a38df"/><stop offset="0.006" stop-color="#1a37df"/><stop offset="0.2708" stop-color="#8379f8"/><stop offset="0.3839" stop-color="#a88dfb"/><stop offset="0.9851" stop-color="#c33850"/><stop offset="1" stop-color="#c4384e"/></linearGradient>
<linearGradient id="g221" gradientUnits="userSpaceOnUse" x1="124" x2="455" y1="0" y2="0"><stop offset="0" stop-color="#1a37e0"/><stop offset="0.2689" stop-color="#8176f8"/><stop offset="0.3837" stop-color="#a68bfb"/><stop offset="0.9849" stop-color="#c03753"/><stop offset="1" stop-color="#c23751"/></linearGradient>
<linearGradient id="g222" gradientUnits="userSpaceOnUse" x1="124" x2="451" y1="0" y2="0"><stop offset="0" stop-color="#1b36e0"/><stop offset="0.0092" stop-color="#1c36e1"/><stop offset="0.2691" stop-color="#7f74f8"/><stop offset="0.3853" stop-color="#a488fb"/><stop offset="0.9817" stop-color="#be3656"/><stop offset="1" stop-color="#c03653"/></linearGradient>
<linearGradient id="g223" gradientUnits="userSpaceOnUse" x1="125" x2="446" y1="0" y2="0"><stop offset="0" stop-color="#1b35e1"/><stop offset="0.0062" stop-color="#1b35e1"/><stop offset="0.2679" stop-color="#7e72f8"/><stop offset="0.3863" stop-color="#a286fb"/><stop offset="0.9844" stop-color="#bc3558"/><stop offset="1" stop-color="#bd3556"/></linearGradient>
<linearGradient id="g224" gradientUnits="userSpaceOnUse" x1="126" x2="442" y1="0" y2="0"><stop offset="0" stop-color="#1b34e1"/><stop offset="0.2658" stop-color="#7c70f8"/><stop offset="0.3861" stop-color="#a184fb"/><stop offset="0.981" stop-color="#ba345c"/><stop offset="1" stop-color="#bb3459"/></linearGradient>
<linearGradient id="g225" gradientUnits="userSpaceOnUse" x1="126" x2="437" y1="0" y2="0"><stop offset="0" stop-color="#1c33e2"/><stop offset="0.0096" stop-color="#1d33e3"/><stop offset="0.2669" stop-color="#7a6ef8"/><stop offset="0.3891" stop-color="#9f81fb"/><stop offset="0.9839" stop-color="#b7335e"/><stop offset="1" stop-color="#b9335c"/></linearGradient>
<linearGradient id="g226" gradientUnits="userSpaceOnUse" x1="127" x2="433" y1="0" y2="0"><stop offset="0" stop-color="#1c32e3"/><stop offset="0.0065" stop-color="#1c32e3"/><stop offset="0.2647" stop-color="#786bf8"/><stop offset="0.3889" stop-color="#9d7ffb"/><stop offset="0.9837" stop-color="#b53261"/><stop offset="1" stop-color="#b7335f"/></linearGradient>
<linearGradient id="g227" gradientUnits="userSpaceOnUse" x1="128" x2="428" y1="0" y2="0"><stop offset="0" stop-color="#1d31e3"/><stop offset="0.2633" stop-color="#7769f8"/><stop offset="0.39" stop-color="#9b7dfb"/><stop offset="0.9833" stop-color="#b33164"/><stop offset="1" stop-color="#b43262"/></linearGradient>
<linearGradient id="g228" gradientUnits="userSpaceOnUse" x1="128" x2="424" y1="0" y2="0"><stop offset="0" stop-color="#1d31e4"/><stop offset="0.0101" stop-color="#1e31e4"/><stop offset="0.2635" stop-color="#7567f8"/><stop offset="0.3919" stop-color="#9a7afb"/><stop offset="0.9831" stop-color="#b13066"/><stop offset="1" stop-color="#b23164"/></linearGradient>
<linearGradient id="g229" gradientUnits="userSpaceOnUse" x1="129" x2="420" y1="0" y2="0"><stop offset="0" stop-color="#1d30e4"/><stop offset="0.0103" stop-color="#1f30e5"/><stop offset="0.2612" stop-color="#7364f8"/><stop offset="0.3918" stop-color="#9878fb"/><stop offset="0.9794" stop-color="#ae306a"/><stop offset="1" stop-color="#b03067"/></linearGradient>
<linearGradient id="g230" gradientUnits="userSpaceOnUse" x1="130" x2="415" y1="0" y2="0"><stop offset="0" stop-color="#1e2fe5"/><stop offset="0.2596" stop-color="#7162f8"/><stop offset="0.393" stop-color="#9676fa"/><stop offset="0.9825" stop-color="#ac2e6c"/><stop offset="1" stop-color="#ae2f6a"/></linearGradient>
<linearGradient id="g231" gradientUnits="userSpaceOnUse" x1="131" x2="411" y1="0" y2="0"><stop offset="0" stop-color="#1e2ee6"/><stop offset="0.2607" stop-color="#7161f8"/><stop offset="0.3929" stop-color="#9473fa"/><stop offset="0.9786" stop-color="#aa2e70"/><stop offset="1" stop-color="#ac2e6c"/></linearGradient>
<linearGradient id="g232" gradientUnits="userSpaceOnUse" x1="131" x2="406" y1="0" y2="0"><stop offset="0" stop-color="#1e2de6"/><stop offset="0.0109" stop-color="#1f2de7"/><stop offset="0.2618" stop-color="#6f5ef8"/><stop offset="0.3964" stop-color="#9271fa"/><stop offset="0.9818" stop-color="#a82d72"/><stop offset="1" stop-color="#a92d6f"/></linearGradient>
<linearGradient id="g233" gradientUnits="userSpaceOnUse" x1="132" x2="402" y1="0" y2="0"><stop offset="0" stop-color="#1f2ce7"/><stop offset="0.0074" stop-color="#1f2ce7"/><stop offset="0.2593" stop-color="#6d5cf8"/><stop offset="0.3963" stop-color="#916ffa"/><stop offset="0.9815" stop-color="#a52c74"/><stop offset="1" stop-color="#a72c72"/></linearGradient>
<linearGradient id="g234" gradientUnits="userSpaceOnUse" x1="133" x2="397" y1="0" y2="0"><stop offset="0" stop-color="#1f2be7"/><stop offset="0.2576" stop-color="#6c5af8"/><stop offset="0.3977" stop-color="#8f6cfa"/><stop offset="0.9811" stop-color="#a32b78"/><stop offset="1" stop-color="#a52b75"/></linearGradient>
<linearGradient id="g235" gradientUnits="userSpaceOnUse" x1="134" x2="393" y1="0" y2="0"><stop offset="0" stop-color="#1f2ae8"/><stop offset="0.2548" stop-color="#6a58f8"/><stop offset="0.3977" stop-color="#8d6afa"/><stop offset="0.9807" stop-color="#a12a7a"/><stop offset="1" stop-color="#a32a78"/></linearGradient>
<linearGradient id="g236" gradientUnits="userSpaceOnUse" x1="134" x2="389" y1="0" y2="0"><stop offset="0" stop-color="#2029e8"/><stop offset="0.0118" stop-color="#2129e9"/><stop offset="0.2588" stop-color="#6956f8"/><stop offset="0.4" stop-color="#8b68fa"/><stop offset="0.9765" stop-color="#9e297e"/><stop offset="1" stop-color="#a12a7a"/></linearGradient>
<linearGradient id="g237" gradientUnits="userSpaceOnUse" x1="135" x2="384" y1="0" y2="0"><stop offset="0" stop-color="#2028e9"/><stop offset="0.257" stop-color="#6754f8"/><stop offset="0.4016" stop-color="#8965fa"/><stop offset="0.9799" stop-color="#9c2880"/><stop offset="1" stop-color="#9e297d"/></linearGradient>
<linearGradient id="g238" gradientUnits="userSpaceOnUse" x1="136" x2="380" y1="0" y2="0"><stop offset="0" stop-color="#2127e9"/><stop offset="0.2541" stop-color="#6651f8"/><stop offset="0.4016" stop-color="#8863fa"/><stop offset="0.9754" stop-color="#9a2783"/><stop offset="1" stop-color="#9c2880"/></linearGradient>
<linearGradient id="g239" gradientUnits="userSpaceOnUse" x1="137" x2="375" y1="0" y2="0"><stop offset="0" stop-color="#2127ea"/><stop offset="0.2563" stop-color="#6550f9"/><stop offset="0.4034" stop-color="#8661fa"/><stop offset="0.979" stop-color="#982686"/><stop offset="1" stop-color="#9a2783"/></linearGradient>
<linearGradient id="g240" gradientUnits="userSpaceOnUse" x1="137" x2="371" y1="0" y2="0"><stop offset="0" stop-color="#2126eb"/><stop offset="0.0128" stop-color="#2226eb"/><stop offset="0.2564" stop-color="#634df9"/><stop offset="0.406" stop-color="#845efa"/><stop offset="0.9786" stop-color="#952588"/><stop offset="1" stop-color="#982686"/></linearGradient>
<linearGradient id="g241" gradientUnits="userSpaceOnUse" x1="138" x2="367" y1="0" y2="0"><stop offset="0" stop-color="#2225eb"/><stop offset="0.2533" stop-color="#614bf9"/><stop offset="0.4061" stop-color="#825cfa"/><stop offset="0.9738" stop-color="#93258c"/><stop offset="1" stop-color="#962588"/></linearGradient>
<linearGradient id="g242" gradientUnits="userSpaceOnUse" x1="139" x2="362" y1="0" y2="0"><stop offset="0" stop-color="#2224ec"/><stop offset="0.2511" stop-color="#6049f8"/><stop offset="0.4081" stop-color="#805afa"/><stop offset="0.9776" stop-color="#91238e"/><stop offset="1" stop-color="#93248b"/></linearGradient>
<linearGradient id="g243" gradientUnits="userSpaceOnUse" x1="140" x2="358" y1="0" y2="0"><stop offset="0" stop-color="#2323ec"/><stop offset="0.2523" stop-color="#5f47f9"/><stop offset="0.4083" stop-color="#7f57f9"/><stop offset="0.9725" stop-color="#8f2391"/><stop offset="1" stop-color="#91238e"/></linearGradient>
<linearGradient id="g244" gradientUnits="userSpaceOnUse" x1="140" x2="353" y1="0" y2="0"><stop offset="0" stop-color="#2322ed"/><stop offset="0.0141" stop-color="#2422ed"/><stop offset="0.2535" stop-color="#5d45f9"/><stop offset="0.4131" stop-color="#7d55f9"/><stop offset="0.9765" stop-color="#8c2294"/><stop offset="1" stop-color="#8f2291"/></linearGradient>
<linearGradient id="g245" gradientUnits="userSpaceOnUse" x1="141" x2="349" y1="0" y2="0"><stop offset="0" stop-color="#2321ed"/><stop offset="0.0144" stop-color="#2421ee"/><stop offset="0.25" stop-color="#5b42f9"/><stop offset="0.4135" stop-color="#7b53f9"/><stop offset="0.976" stop-color="#8a2196"/><stop offset="1" stop-color="#8c2193"/></linearGradient>
<linearGradient id="g246" gradientUnits="userSpaceOnUse" x1="142" x2="344" y1="0" y2="0"><stop offset="0" stop-color="#2420ee"/><stop offset="0.2525" stop-color="#5b41f9"/><stop offset="0.4158" stop-color="#7950f9"/><stop offset="0.9752" stop-color="#88209a"/><stop offset="1" stop-color="#8a2097"/></linearGradient>
<linearGradient id="g247" gradientUnits="userSpaceOnUse" x1="143" x2="340" y1="0" y2="0"><stop offset="0" stop-color="#241fee"/><stop offset="0.2487" stop-color="#593ef9"/><stop offset="0.4162" stop-color="#774ef9"/><stop offset="0.9746" stop-color="#861f9c"/><stop offset="1" stop-color="#882099"/></linearGradient>
<linearGradient id="g248" gradientUnits="userSpaceOnUse" x1="144" x2="336" y1="0" y2="0"><stop offset="0" stop-color="#251eef"/><stop offset="0.2448" stop-color="#573cf9"/><stop offset="0.4167" stop-color="#764bf9"/><stop offset="0.9688" stop-color="#831e9f"/><stop offset="1" stop-color="#861f9c"/></linearGradient>
<linearGradient id="g249" gradientUnits="userSpaceOnUse" x1="145" x2="331" y1="0" y2="0"><stop offset="0" stop-color="#251def"/><stop offset="0.2473" stop-color="#563af9"/><stop offset="0.4194" stop-color="#7449f9"/><stop offset="0.9731" stop-color="#811da2"/><stop offset="1" stop-color="#831e9f"/></linearGradient>
<linearGradient id="g250" gradientUnits="userSpaceOnUse" x1="146" x2="327" y1="0" y2="0"><stop offset="0" stop-color="#261df0"/><stop offset="0.2431" stop-color="#5538f9"/><stop offset="0.4199" stop-color="#7247f9"/><stop offset="0.9669" stop-color="#7f1ca5"/><stop offset="1" stop-color="#811da1"/></linearGradient>
<linearGradient id="g251" gradientUnits="userSpaceOnUse" x1="146" x2="322" y1="0" y2="0"><stop offset="0" stop-color="#261cf0"/><stop offset="0.017" stop-color="#271bf1"/><stop offset="0.2443" stop-color="#5336f9"/><stop offset="0.4261" stop-color="#7044f9"/><stop offset="0.9716" stop-color="#7d1ba8"/><stop offset="1" stop-color="#7f1ca4"/></linearGradient>
<linearGradient id="g252" gradientUnits="userSpaceOnUse" x1="147" x2="318" y1="0" y2="0"><stop offset="0" stop-color="#261bf1"/><stop offset="0.0175" stop-color="#271bf1"/><stop offset="0.2398" stop-color="#5133f9"/><stop offset="0.4269" stop-color="#6e42f9"/><stop offset="0.9708" stop-color="#7a1aaa"/><stop offset="1" stop-color="#7d1ba7"/></linearGradient>
<linearGradient id="g253" gradientUnits="userSpaceOnUse" x1="148" x2="313" y1="0" y2="0"><stop offset="0" stop-color="#271af1"/><stop offset="0.0182" stop-color="#281af2"/><stop offset="0.2424" stop-color="#5032f9"/><stop offset="0.4303" stop-color="#6d40f9"/><stop offset="0.9697" stop-color="#781aad"/><stop offset="1" stop-color="#7a1aaa"/></linearGradient>
<linearGradient id="g254" gradientUnits="userSpaceOnUse" x1="149" x2="309" y1="0" y2="0"><stop offset="0" stop-color="#2719f2"/><stop offset="0.2375" stop-color="#4f2ff9"/><stop offset="0.4313" stop-color="#6b3df9"/><stop offset="0.9688" stop-color="#7618b0"/><stop offset="1" stop-color="#7819ad"/></linearGradient>
<linearGradient id="g255" gradientUnits="userSpaceOnUse" x1="150" x2="305" y1="0" y2="0"><stop offset="0" stop-color="#2818f2"/><stop offset="0.2323" stop-color="#4d2df9"/><stop offset="0.4323" stop-color="#693bf8"/><stop offset="0.9613" stop-color="#7418b3"/><stop offset="1" stop-color="#7619af"/></linearGradient>
<linearGradient id="g256" gradientUnits="userSpaceOnUse" x1="151" x2="300" y1="0" y2="0"><stop offset="0" stop-color="#2817f3"/><stop offset="0.2349" stop-color="#4c2bf9"/><stop offset="0.4362" stop-color="#6739f8"/><stop offset="0.9664" stop-color="#7117b6"/><stop offset="1" stop-color="#7418b2"/></linearGradient>
<linearGradient id="g257" gradientUnits="userSpaceOnUse" x1="152" x2="296" y1="0" y2="0"><stop offset="0" stop-color="#2916f3"/><stop offset="0.2292" stop-color="#4a29f9"/><stop offset="0.4375" stop-color="#6536f8"/><stop offset="0.9653" stop-color="#6f16b8"/><stop offset="1" stop-color="#7217b5"/></linearGradient>
<linearGradient id="g258" gradientUnits="userSpaceOnUse" x1="153" x2="291" y1="0" y2="0"><stop offset="0" stop-color="#2915f4"/><stop offset="0.2246" stop-color="#4826f9"/><stop offset="0.442" stop-color="#6334f8"/><stop offset="0.9638" stop-color="#6d15bb"/><stop offset="1" stop-color="#6f16b8"/></linearGradient>
<linearGradient id="g259" gradientUnits="userSpaceOnUse" x1="154" x2="287" y1="0" y2="0"><stop offset="0" stop-color="#2a15f4"/><stop offset="0.2256" stop-color="#4825f9"/><stop offset="0.4436" stop-color="#6231f8"/><stop offset="0.9624" stop-color="#6b14be"/><stop offset="1" stop-color="#6d15ba"/></linearGradient>
<linearGradient id="g260" gradientUnits="userSpaceOnUse" x1="155" x2="283" y1="0" y2="0"><stop offset="0" stop-color="#2a14f5"/><stop offset="0.0234" stop-color="#2b13f5"/><stop offset="0.2188" stop-color="#4622f8"/><stop offset="0.4453" stop-color="#602ff8"/><stop offset="0.9531" stop-color="#6813c1"/><stop offset="1" stop-color="#6b14bd"/></linearGradient>
<linearGradient id="g261" gradientUnits="userSpaceOnUse" x1="156" x2="278" y1="0" y2="0"><stop offset="0" stop-color="#2b13f5"/><stop offset="0.0246" stop-color="#2c12f5"/><stop offset="0.2213" stop-color="#4520f8"/><stop offset="0.4508" stop-color="#5e2df8"/><stop offset="0.959" stop-color="#6612c4"/><stop offset="1" stop-color="#6913c0"/></linearGradient>
<linearGradient id="g262" gradientUnits="userSpaceOnUse" x1="157" x2="274" y1="0" y2="0"><stop offset="0" stop-color="#2b12f5"/><stop offset="0.0256" stop-color="#2c11f6"/><stop offset="0.453" stop-color="#5c2af8"/><stop offset="0.9487" stop-color="#6411c7"/><stop offset="1" stop-color="#6712c3"/></linearGradient>
<linearGradient id="g263" gradientUnits="userSpaceOnUse" x1="159" x2="269" y1="0" y2="0"><stop offset="0" stop-color="#2c11f6"/><stop offset="0.4545" stop-color="#5a28f8"/><stop offset="0.9545" stop-color="#6110c9"/><stop offset="1" stop-color="#6411c6"/></linearGradient>
<linearGradient id="g264" gradientUnits="userSpaceOnUse" x1="160" x2="265" y1="0" y2="0"><stop offset="0" stop-color="#2d10f6"/><stop offset="0.4571" stop-color="#5926f8"/><stop offset="0.9524" stop-color="#5f0fcc"/><stop offset="1" stop-color="#6210c8"/></linearGradient>
<linearGradient id="g265" gradientUnits="userSpaceOnUse" x1="161" x2="260" y1="0" y2="0"><stop offset="0" stop-color="#2d0ff6"/><stop offset="0.4646" stop-color="#5723f8"/><stop offset="0.9495" stop-color="#5d0fcf"/><stop offset="1" stop-color="#600fcc"/></linearGradient>
<linearGradient id="g266" gradientUnits="userSpaceOnUse" x1="162" x2="256" y1="0" y2="0"><stop offset="0" stop-color="#2e0ef7"/><stop offset="0.0319" stop-color="#2f0df7"/><stop offset="0.4681" stop-color="#5521f8"/><stop offset="0.9468" stop-color="#5b0dd2"/><stop offset="1" stop-color="#5e0fce"/></linearGradient>
<linearGradient id="g267" gradientUnits="userSpaceOnUse" x1="164" x2="252" y1="0" y2="0"><stop offset="0" stop-color="#2f0df7"/><stop offset="0.4659" stop-color="#531ef8"/><stop offset="0.9318" stop-color="#580dd5"/><stop offset="1" stop-color="#5c0ed0"/></linearGradient>
<linearGradient id="g268" gradientUnits="userSpaceOnUse" x1="165" x2="247" y1="0" y2="0"><stop offset="0" stop-color="#2f0df7"/><stop offset="0.0366" stop-color="#300cf8"/><stop offset="0.4756" stop-color="#511cf7"/><stop offset="0.939" stop-color="#560cd7"/><stop offset="1" stop-color="#590dd4"/></linearGradient>
<linearGradient id="g269" gradientUnits="userSpaceOnUse" x1="167" x2="243" y1="0" y2="0"><stop offset="0" stop-color="#300bf8"/><stop offset="0.4737" stop-color="#4f1af7"/><stop offset="0.9342" stop-color="#540bda"/><stop offset="1" stop-color="#570cd6"/></linearGradient>
<linearGradient id="g270" gradientUnits="userSpaceOnUse" x1="168" x2="238" y1="0" y2="0"><stop offset="0" stop-color="#310bf8"/><stop offset="0.0571" stop-color="#330af8"/><stop offset="0.4857" stop-color="#4e17f7"/><stop offset="0.9286" stop-color="#520add"/><stop offset="1" stop-color="#540bd9"/></linearGradient>
<linearGradient id="g271" gradientUnits="userSpaceOnUse" x1="170" x2="234" y1="0" y2="0"><stop offset="0" stop-color="#320af8"/><stop offset="0.4844" stop-color="#4c15f7"/><stop offset="0.9219" stop-color="#4f09e0"/><stop offset="1" stop-color="#520adc"/></linearGradient>
<linearGradient id="g272" gradientUnits="userSpaceOnUse" x1="172" x2="229" y1="0" y2="0"><stop offset="0" stop-color="#3309f8"/><stop offset="0.4912" stop-color="#4a12f7"/><stop offset="0.9123" stop-color="#4d08e3"/><stop offset="1" stop-color="#5009df"/></linearGradient>
<linearGradient id="g273" gradientUnits="userSpaceOnUse" x1="174" x2="225" y1="0" y2="0"><stop offset="0" stop-color="#3408f8"/><stop offset="0.4902" stop-color="#4810f7"/><stop offset="0.902" stop-color="#4b07e5"/><stop offset="1" stop-color="#4e08e2"/></linearGradient>
<linearGradient id="g274" gradientUnits="userSpaceOnUse" x1="176" x2="221" y1="0" y2="0"><stop offset="0" stop-color="#3507f8"/><stop offset="0.4889" stop-color="#460ef7"/><stop offset="0.8667" stop-color="#4906e9"/><stop offset="1" stop-color="#4c07e4"/></linearGradient>
<linearGradient id="g275" gradientUnits="userSpaceOnUse" x1="179" x2="216" y1="0" y2="0"><stop offset="0" stop-color="#3606f8"/><stop offset="0.4865" stop-color="#450bf7"/><stop offset="0.8649" stop-color="#4605eb"/><stop offset="1" stop-color="#4906e7"/></linearGradient>
<linearGradient id="g276" gradientUnits="userSpaceOnUse" x1="181" x2="212" y1="0" y2="0"><stop offset="0" stop-color="#3705f8"/><stop offset="0.4839" stop-color="#4309f7"/><stop offset="0.8387" stop-color="#4404ee"/><stop offset="1" stop-color="#4706ea"/></linearGradient>
<linearGradient id="g277" gradientUnits="userSpaceOnUse" x1="183" x2="207" y1="0" y2="0"><stop offset="0" stop-color="#3904f8"/><stop offset="0.5" stop-color="#4107f7"/><stop offset="1" stop-color="#4505ed"/></linearGradient>
<linearGradient id="g278" gradientUnits="userSpaceOnUse" x1="186" x2="203" y1="0" y2="0"><stop offset="0" stop-color="#3a03f7"/><stop offset="0.4706" stop-color="#3f04f7"/><stop offset="1" stop-color="#4304ef"/></linearGradient>
<linearGradient id="g279" gradientUnits="userSpaceOnUse" x1="188" x2="198" y1="0" y2="0"><stop offset="0" stop-color="#3b02f7"/><stop offset="1" stop-color="#4003f3"/></linearGradient>
</defs>
<rect x="0" y="0" width="733" height="686" fill="#b3b3b3"/>
<text x="5.5" y="11.8" font-size="11.5" fill="#0c0c24" textLength="63" lengthAdjust="spacingAndGlyphs">Chromaticity</text>
<rect x="0" y="25" width="716" height="661" fill="#d9d5cd"/>
<rect x="0" y="25" width="13" height="661" fill="url(#bl)"/>
<rect x="703" y="25" width="13" height="661" fill="url(#br)"/>
<rect x="0" y="25" width="715" height="1" fill="#f1eee5"/><rect x="0" y="26" width="714" height="1" fill="#e8e4db"/><rect x="13" y="27" width="690" height="1" fill="#dfdbd3"/>
<rect x="716" y="25" width="1" height="661" fill="#bababa"/>
<rect x="0" y="684" width="714" height="1" fill="#bdb9af"/>
<rect x="0" y="685" width="715" height="1" fill="#98958c"/>
<rect x="72" y="33" width="623" height="607" fill="#ffffff"/>
<rect x="72" y="33" width="622" height="1" fill="#a2a2a2"/>
<rect x="72" y="33" width="1" height="606" fill="#a8a8a8"/>
<rect x="73" y="34" width="1" height="605" fill="#d4d4d4"/>
<rect x="73" y="638" width="621" height="1" fill="#c2c2c2"/>
<g clip-path="url(#cl)" shape-rendering="crispEdges">
<rect x="121" y="78" width="16" height="2" fill="url(#g1)"/>
<rect x="114" y="80" width="31" height="2" fill="url(#g2)"/>
<rect x="110" y="82" width="41" height="2" fill="url(#g3)"/>
<rect x="107" y="84" width="49" height="2" fill="url(#g4)"/>
<rect x="105" y="86" width="56" height="2" fill="url(#g5)"/>
<rect x="103" y="88" width="62" height="2" fill="url(#g6)"/>
<rect x="101" y="90" width="68" height="2" fill="url(#g7)"/>
<rect x="99" y="92" width="74" height="2" fill="url(#g8)"/>
<rect x="98" y="94" width="79" height="2" fill="url(#g9)"/>
<rect x="96" y="96" width="84" height="2" fill="url(#g10)"/>
<rect x="95" y="98" width="89" height="2" fill="url(#g11)"/>
<rect x="94" y="100" width="93" height="2" fill="url(#g12)"/>
<rect x="93" y="102" width="98" height="2" fill="url(#g13)"/>
<rect x="92" y="104" width="102" height="2" fill="url(#g14)"/>
<rect x="91" y="106" width="106" height="2" fill="url(#g15)"/>
<rect x="90" y="108" width="110" height="2" fill="url(#g16)"/>
<rect x="89" y="110" width="114" height="2" fill="url(#g17)"/>
<rect x="88" y="112" width="118" height="2" fill="url(#g18)"/>
<rect x="88" y="114" width="121" height="2" fill="url(#g19)"/>
<rect x="87" y="116" width="125" height="2" fill="url(#g20)"/>
<rect x="86" y="118" width="129" height="2" fill="url(#g21)"/>
<rect x="85" y="120" width="133" height="2" fill="url(#g22)"/>
<rect x="85" y="122" width="136" height="2" fill="url(#g23)"/>
<rect x="84" y="124" width="139" height="2" fill="url(#g24)"/>
<rect x="84" y="126" width="142" height="2" fill="url(#g25)"/>
<rect x="83" y="128" width="146" height="2" fill="url(#g26)"/>
<rect x="83" y="130" width="148" height="2" fill="url(#g27)"/>
<rect x="82" y="132" width="152" height="2" fill="url(#g28)"/>
<rect x="82" y="134" width="155" height="2" fill="url(#g29)"/>
<rect x="81" y="136" width="158" height="2" fill="url(#g30)"/>
<rect x="81" y="138" width="161" height="2" fill="url(#g31)"/>
<rect x="80" y="140" width="164" height="2" fill="url(#g32)"/>
<rect x="80" y="142" width="167" height="2" fill="url(#g33)"/>
<rect x="80" y="144" width="169" height="2" fill="url(#g34)"/>
<rect x="79" y="146" width="173" height="2" fill="url(#g35)"/>
<rect x="79" y="148" width="175" height="2" fill="url(#g36)"/>
<rect x="79" y="150" width="177" height="2" fill="url(#g37)"/>
<rect x="78" y="152" width="181" height="2" fill="url(#g38)"/>
<rect x="78" y="154" width="183" height="2" fill="url(#g39)"/>
<rect x="78" y="156" width="185" height="2" fill="url(#g40)"/>
<rect x="78" y="158" width="188" height="2" fill="url(#g41)"/>
<rect x="77" y="160" width="191" height="2" fill="url(#g42)"/>
<rect x="77" y="162" width="193" height="2" fill="url(#g43)"/>
<rect x="77" y="164" width="196" height="2" fill="url(#g44)"/>
<rect x="77" y="166" width="198" height="2" fill="url(#g45)"/>
<rect x="76" y="168" width="201" height="2" fill="url(#g46)"/>
<rect x="76" y="170" width="203" height="2" fill="url(#g47)"/>
<rect x="76" y="172" width="206" height="2" fill="url(#g48)"/>
<rect x="76" y="174" width="208" height="2" fill="url(#g49)"/>
<rect x="76" y="176" width="210" height="2" fill="url(#g50)"/>
<rect x="76" y="178" width="212" height="2" fill="url(#g51)"/>
<rect x="76" y="180" width="215" height="2" fill="url(#g52)"/>
<rect x="75" y="182" width="218" height="2" fill="url(#g53)"/>
<rect x="75" y="184" width="220" height="2" fill="url(#g54)"/>
<rect x="75" y="186" width="222" height="2" fill="url(#g55)"/>
<rect x="75" y="188" width="224" height="2" fill="url(#g56)"/>
<rect x="75" y="190" width="226" height="2" fill="url(#g57)"/>
<rect x="75" y="192" width="229" height="2" fill="url(#g58)"/>
<rect x="75" y="194" width="231" height="2" fill="url(#g59)"/>
<rect x="75" y="196" width="233" height="2" fill="url(#g60)"/>
<rect x="75" y="198" width="235" height="2" fill="url(#g61)"/>
<rect x="75" y="200" width="237" height="2" fill="url(#g62)"/>
<rect x="75" y="202" width="239" height="2" fill="url(#g63)"/>
<rect x="75" y="204" width="242" height="2" fill="url(#g64)"/>
<rect x="75" y="206" width="244" height="2" fill="url(#g65)"/>
<rect x="75" y="208" width="246" height="2" fill="url(#g66)"/>
<rect x="75" y="210" width="248" height="2" fill="url(#g67)"/>
<rect x="75" y="212" width="250" height="2" fill="url(#g68)"/>
<rect x="75" y="214" width="252" height="2" fill="url(#g69)"/>
<rect x="75" y="216" width="254" height="2" fill="url(#g70)"/>
<rect x="75" y="218" width="256" height="2" fill="url(#g71)"/>
<rect x="75" y="220" width="259" height="2" fill="url(#g72)"/>
<rect x="75" y="222" width="261" height="2" fill="url(#g73)"/>
<rect x="75" y="224" width="263" height="2" fill="url(#g74)"/>
<rect x="75" y="226" width="265" height="2" fill="url(#g75)"/>
<rect x="75" y="228" width="267" height="2" fill="url(#g76)"/>
<rect x="75" y="230" width="269" height="2" fill="url(#g77)"/>
<rect x="75" y="232" width="271" height="2" fill="url(#g78)"/>
<rect x="75" y="234" width="273" height="2" fill="url(#g79)"/>
<rect x="75" y="236" width="275" height="2" fill="url(#g80)"/>
<rect x="75" y="238" width="277" height="2" fill="url(#g81)"/>
<rect x="75" y="240" width="280" height="2" fill="url(#g82)"/>
<rect x="75" y="242" width="282" height="2" fill="url(#g83)"/>
<rect x="75" y="244" width="284" height="2" fill="url(#g84)"/>
<rect x="76" y="246" width="285" height="2" fill="url(#g85)"/>
<rect x="76" y="248" width="287" height="2" fill="url(#g86)"/>
<rect x="76" y="250" width="289" height="2" fill="url(#g87)"/>
<rect x="76" y="252" width="291" height="2" fill="url(#g88)"/>
<rect x="76" y="254" width="293" height="2" fill="url(#g89)"/>
<rect x="76" y="256" width="295" height="2" fill="url(#g90)"/>
<rect x="76" y="258" width="297" height="2" fill="url(#g91)"/>
<rect x="76" y="260" width="299" height="2" fill="url(#g92)"/>
<rect x="77" y="262" width="300" height="2" fill="url(#g93)"/>
<rect x="77" y="264" width="303" height="2" fill="url(#g94)"/>
<rect x="77" y="266" width="305" height="2" fill="url(#g95)"/>
<rect x="77" y="268" width="307" height="2" fill="url(#g96)"/>
<rect x="77" y="270" width="309" height="2" fill="url(#g97)"/>
<rect x="77" y="272" width="311" height="2" fill="url(#g98)"/>
<rect x="77" y="274" width="313" height="2" fill="url(#g99)"/>
<rect x="78" y="276" width="314" height="2" fill="url(#g100)"/>
<rect x="78" y="278" width="316" height="2" fill="url(#g101)"/>
<rect x="78" y="280" width="318" height="2" fill="url(#g102)"/>
<rect x="78" y="282" width="320" height="2" fill="url(#g103)"/>
<rect x="78" y="284" width="322" height="2" fill="url(#g104)"/>
<rect x="79" y="286" width="323" height="2" fill="url(#g105)"/>
<rect x="79" y="288" width="325" height="2" fill="url(#g106)"/>
<rect x="79" y="290" width="327" height="2" fill="url(#g107)"/>
<rect x="79" y="292" width="329" height="2" fill="url(#g108)"/>
<rect x="79" y="294" width="332" height="2" fill="url(#g109)"/>
<rect x="80" y="296" width="333" height="2" fill="url(#g110)"/>
<rect x="80" y="298" width="335" height="2" fill="url(#g111)"/>
<rect x="80" y="300" width="337" height="2" fill="url(#g112)"/>
<rect x="80" y="302" width="339" height="2" fill="url(#g113)"/>
<rect x="80" y="304" width="341" height="2" fill="url(#g114)"/>
<rect x="81" y="306" width="342" height="2" fill="url(#g115)"/>
<rect x="81" y="308" width="344" height="2" fill="url(#g116)"/>
<rect x="81" y="310" width="346" height="2" fill="url(#g117)"/>
<rect x="81" y="312" width="348" height="2" fill="url(#g118)"/>
<rect x="82" y="314" width="349" height="2" fill="url(#g119)"/>
<rect x="82" y="316" width="351" height="2" fill="url(#g120)"/>
<rect x="82" y="318" width="353" height="2" fill="url(#g121)"/>
<rect x="82" y="320" width="355" height="2" fill="url(#g122)"/>
<rect x="83" y="322" width="356" height="2" fill="url(#g123)"/>
<rect x="83" y="324" width="358" height="2" fill="url(#g124)"/>
<rect x="83" y="326" width="360" height="2" fill="url(#g125)"/>
<rect x="83" y="328" width="363" height="2" fill="url(#g126)"/>
<rect x="84" y="330" width="364" height="2" fill="url(#g127)"/>
<rect x="84" y="332" width="366" height="2" fill="url(#g128)"/>
<rect x="84" y="334" width="368" height="2" fill="url(#g129)"/>
<rect x="84" y="336" width="370" height="2" fill="url(#g130)"/>
<rect x="85" y="338" width="371" height="2" fill="url(#g131)"/>
<rect x="85" y="340" width="373" height="2" fill="url(#g132)"/>
<rect x="85" y="342" width="375" height="2" fill="url(#g133)"/>
<rect x="86" y="344" width="376" height="2" fill="url(#g134)"/>
<rect x="86" y="346" width="378" height="2" fill="url(#g135)"/>
<rect x="86" y="348" width="380" height="2" fill="url(#g136)"/>
<rect x="86" y="350" width="382" height="2" fill="url(#g137)"/>
<rect x="87" y="352" width="383" height="2" fill="url(#g138)"/>
<rect x="87" y="354" width="385" height="2" fill="url(#g139)"/>
<rect x="87" y="356" width="387" height="2" fill="url(#g140)"/>
<rect x="88" y="358" width="388" height="2" fill="url(#g141)"/>
<rect x="88" y="360" width="391" height="2" fill="url(#g142)"/>
<rect x="88" y="362" width="393" height="2" fill="url(#g143)"/>
<rect x="89" y="364" width="394" height="2" fill="url(#g144)"/>
<rect x="89" y="366" width="396" height="2" fill="url(#g145)"/>
<rect x="89" y="368" width="398" height="2" fill="url(#g146)"/>
<rect x="90" y="370" width="399" height="2" fill="url(#g147)"/>
<rect x="90" y="372" width="401" height="2" fill="url(#g148)"/>
<rect x="90" y="374" width="403" height="2" fill="url(#g149)"/>
<rect x="91" y="376" width="404" height="2" fill="url(#g150)"/>
<rect x="91" y="378" width="406" height="2" fill="url(#g151)"/>
<rect x="91" y="380" width="408" height="2" fill="url(#g152)"/>
<rect x="92" y="382" width="409" height="2" fill="url(#g153)"/>
<rect x="92" y="384" width="411" height="2" fill="url(#g154)"/>
<rect x="92" y="386" width="413" height="2" fill="url(#g155)"/>
<rect x="93" y="388" width="414" height="2" fill="url(#g156)"/>
<rect x="93" y="390" width="416" height="2" fill="url(#g157)"/>
<rect x="93" y="392" width="418" height="2" fill="url(#g158)"/>
<rect x="94" y="394" width="420" height="2" fill="url(#g159)"/>
<rect x="94" y="396" width="422" height="2" fill="url(#g160)"/>
<rect x="95" y="398" width="423" height="2" fill="url(#g161)"/>
<rect x="95" y="400" width="425" height="2" fill="url(#g162)"/>
<rect x="95" y="402" width="427" height="2" fill="url(#g163)"/>
<rect x="96" y="404" width="428" height="2" fill="url(#g164)"/>
<rect x="96" y="406" width="430" height="2" fill="url(#g165)"/>
<rect x="97" y="408" width="431" height="2" fill="url(#g166)"/>
<rect x="97" y="410" width="433" height="2" fill="url(#g167)"/>
<rect x="97" y="412" width="435" height="2" fill="url(#g168)"/>
<rect x="98" y="414" width="436" height="2" fill="url(#g169)"/>
<rect x="98" y="416" width="438" height="2" fill="url(#g170)"/>
<rect x="98" y="418" width="440" height="2" fill="url(#g171)"/>
<rect x="99" y="420" width="441" height="2" fill="url(#g172)"/>
<rect x="99" y="422" width="443" height="2" fill="url(#g173)"/>
<rect x="100" y="424" width="444" height="2" fill="url(#g174)"/>
<rect x="100" y="426" width="447" height="2" fill="url(#g175)"/>
<rect x="101" y="428" width="448" height="2" fill="url(#g176)"/>
<rect x="101" y="430" width="450" height="2" fill="url(#g177)"/>
<rect x="101" y="432" width="452" height="2" fill="url(#g178)"/>
<rect x="102" y="434" width="453" height="2" fill="url(#g179)"/>
<rect x="102" y="436" width="455" height="2" fill="url(#g180)"/>
<rect x="103" y="438" width="456" height="2" fill="url(#g181)"/>
<rect x="103" y="440" width="458" height="2" fill="url(#g182)"/>
<rect x="104" y="442" width="459" height="2" fill="url(#g183)"/>
<rect x="104" y="444" width="461" height="2" fill="url(#g184)"/>
<rect x="104" y="446" width="463" height="2" fill="url(#g185)"/>
<rect x="105" y="448" width="464" height="2" fill="url(#g186)"/>
<rect x="105" y="450" width="466" height="2" fill="url(#g187)"/>
<rect x="106" y="452" width="467" height="2" fill="url(#g188)"/>
<rect x="106" y="454" width="469" height="2" fill="url(#g189)"/>
<rect x="107" y="456" width="470" height="2" fill="url(#g190)"/>
<rect x="107" y="458" width="473" height="2" fill="url(#g191)"/>
<rect x="108" y="460" width="473" height="2" fill="url(#g192)"/>
<rect x="108" y="462" width="471" height="2" fill="url(#g193)"/>
<rect x="109" y="464" width="465" height="2" fill="url(#g194)"/>
<rect x="109" y="466" width="461" height="2" fill="url(#g195)"/>
<rect x="110" y="468" width="456" height="2" fill="url(#g196)"/>
<rect x="110" y="470" width="451" height="2" fill="url(#g197)"/>
<rect x="111" y="472" width="446" height="2" fill="url(#g198)"/>
<rect x="111" y="474" width="441" height="2" fill="url(#g199)"/>
<rect x="112" y="476" width="436" height="2" fill="url(#g200)"/>
<rect x="112" y="478" width="431" height="2" fill="url(#g201)"/>
<rect x="113" y="480" width="426" height="2" fill="url(#g202)"/>
<rect x="113" y="482" width="422" height="2" fill="url(#g203)"/>
<rect x="114" y="484" width="416" height="2" fill="url(#g204)"/>
<rect x="114" y="486" width="412" height="2" fill="url(#g205)"/>
<rect x="115" y="488" width="406" height="2" fill="url(#g206)"/>
<rect x="115" y="490" width="402" height="2" fill="url(#g207)"/>
<rect x="116" y="492" width="396" height="2" fill="url(#g208)"/>
<rect x="116" y="494" width="392" height="2" fill="url(#g209)"/>
<rect x="117" y="496" width="387" height="2" fill="url(#g210)"/>
<rect x="118" y="498" width="381" height="2" fill="url(#g211)"/>
<rect x="118" y="500" width="377" height="2" fill="url(#g212)"/>
<rect x="119" y="502" width="371" height="2" fill="url(#g213)"/>
<rect x="119" y="504" width="367" height="2" fill="url(#g214)"/>
<rect x="120" y="506" width="362" height="2" fill="url(#g215)"/>
<rect x="121" y="508" width="356" height="2" fill="url(#g216)"/>
<rect x="121" y="510" width="352" height="2" fill="url(#g217)"/>
<rect x="122" y="512" width="346" height="2" fill="url(#g218)"/>
<rect x="122" y="514" width="342" height="2" fill="url(#g219)"/>
<rect x="123" y="516" width="336" height="2" fill="url(#g220)"/>
<rect x="124" y="518" width="331" height="2" fill="url(#g221)"/>
<rect x="124" y="520" width="327" height="2" fill="url(#g222)"/>
<rect x="125" y="522" width="321" height="2" fill="url(#g223)"/>
<rect x="126" y="524" width="316" height="2" fill="url(#g224)"/>
<rect x="126" y="526" width="311" height="2" fill="url(#g225)"/>
<rect x="127" y="528" width="306" height="2" fill="url(#g226)"/>
<rect x="128" y="530" width="300" height="2" fill="url(#g227)"/>
<rect x="128" y="532" width="296" height="2" fill="url(#g228)"/>
<rect x="129" y="534" width="291" height="2" fill="url(#g229)"/>
<rect x="130" y="536" width="285" height="2" fill="url(#g230)"/>
<rect x="131" y="538" width="280" height="2" fill="url(#g231)"/>
<rect x="131" y="540" width="275" height="2" fill="url(#g232)"/>
<rect x="132" y="542" width="270" height="2" fill="url(#g233)"/>
<rect x="133" y="544" width="264" height="2" fill="url(#g234)"/>
<rect x="134" y="546" width="259" height="2" fill="url(#g235)"/>
<rect x="134" y="548" width="255" height="2" fill="url(#g236)"/>
<rect x="135" y="550" width="249" height="2" fill="url(#g237)"/>
<rect x="136" y="552" width="244" height="2" fill="url(#g238)"/>
<rect x="137" y="554" width="238" height="2" fill="url(#g239)"/>
<rect x="137" y="556" width="234" height="2" fill="url(#g240)"/>
<rect x="138" y="558" width="229" height="2" fill="url(#g241)"/>
<rect x="139" y="560" width="223" height="2" fill="url(#g242)"/>
<rect x="140" y="562" width="218" height="2" fill="url(#g243)"/>
<rect x="140" y="564" width="213" height="2" fill="url(#g244)"/>
<rect x="141" y="566" width="208" height="2" fill="url(#g245)"/>
<rect x="142" y="568" width="202" height="2" fill="url(#g246)"/>
<rect x="143" y="570" width="197" height="2" fill="url(#g247)"/>
<rect x="144" y="572" width="192" height="2" fill="url(#g248)"/>
<rect x="145" y="574" width="186" height="2" fill="url(#g249)"/>
<rect x="146" y="576" width="181" height="2" fill="url(#g250)"/>
<rect x="146" y="578" width="176" height="2" fill="url(#g251)"/>
<rect x="147" y="580" width="171" height="2" fill="url(#g252)"/>
<rect x="148" y="582" width="165" height="2" fill="url(#g253)"/>
<rect x="149" y="584" width="160" height="2" fill="url(#g254)"/>
<rect x="150" y="586" width="155" height="2" fill="url(#g255)"/>
<rect x="151" y="588" width="149" height="2" fill="url(#g256)"/>
<rect x="152" y="590" width="144" height="2" fill="url(#g257)"/>
<rect x="153" y="592" width="138" height="2" fill="url(#g258)"/>
<rect x="154" y="594" width="133" height="2" fill="url(#g259)"/>
<rect x="155" y="596" width="128" height="2" fill="url(#g260)"/>
<rect x="156" y="598" width="122" height="2" fill="url(#g261)"/>
<rect x="157" y="600" width="117" height="2" fill="url(#g262)"/>
<rect x="159" y="602" width="110" height="2" fill="url(#g263)"/>
<rect x="160" y="604" width="105" height="2" fill="url(#g264)"/>
<rect x="161" y="606" width="99" height="2" fill="url(#g265)"/>
<rect x="162" y="608" width="94" height="2" fill="url(#g266)"/>
<rect x="164" y="610" width="88" height="2" fill="url(#g267)"/>
<rect x="165" y="612" width="82" height="2" fill="url(#g268)"/>
<rect x="167" y="614" width="76" height="2" fill="url(#g269)"/>
<rect x="168" y="616" width="70" height="2" fill="url(#g270)"/>
<rect x="170" y="618" width="64" height="2" fill="url(#g271)"/>
<rect x="172" y="620" width="57" height="2" fill="url(#g272)"/>
<rect x="174" y="622" width="51" height="2" fill="url(#g273)"/>
<rect x="176" y="624" width="45" height="2" fill="url(#g274)"/>
<rect x="179" y="626" width="37" height="2" fill="url(#g275)"/>
<rect x="181" y="628" width="31" height="2" fill="url(#g276)"/>
<rect x="183" y="630" width="24" height="2" fill="url(#g277)"/>
<rect x="186" y="632" width="17" height="2" fill="url(#g278)"/>
<rect x="188" y="634" width="10" height="2" fill="url(#g279)"/>
</g>
<g clip-path="url(#cp)" font-size="12" fill="#6c6c6c">
<path d="M191.9 635.1h3M193.4 633.6v3" stroke="#707070" stroke-width="1" fill="none"/>
<text x="153.6" y="639.4" textLength="31.3" lengthAdjust="spacingAndGlyphs">380nm</text>
<path d="M179.9 626.6h3M181.4 625.1v3" stroke="#707070" stroke-width="1" fill="none"/>
<text x="141.6" y="630.9" textLength="31.3" lengthAdjust="spacingAndGlyphs">450nm</text>
<path d="M171.2 618.5h3M172.7 617.0v3" stroke="#707070" stroke-width="1" fill="none"/>
<text x="132.9" y="622.8" textLength="31.3" lengthAdjust="spacingAndGlyphs">460nm</text>
<path d="M157.5 599.7h3M159.0 598.2v3" stroke="#707070" stroke-width="1" fill="none"/>
<text x="119.2" y="604.0" textLength="31.3" lengthAdjust="spacingAndGlyphs">470nm</text>
<path d="M134.9 549.4h3M136.4 547.9v3" stroke="#707070" stroke-width="1" fill="none"/>
<text x="96.6" y="553.7" textLength="31.3" lengthAdjust="spacingAndGlyphs">480nm</text>
<path d="M103.3 440.5h3M104.8 439.0v3" stroke="#707070" stroke-width="1" fill="none"/>
<text x="65.0" y="444.8" textLength="31.3" lengthAdjust="spacingAndGlyphs">490nm</text>
<path d="M77.6 277.2h3M79.1 275.7v3" stroke="#a06070" stroke-width="1" fill="none"/>
<text x="84.4" y="281.5" textLength="31.3" lengthAdjust="spacingAndGlyphs" fill="#94757e">500nm</text>
<path d="M81.6 135.1h3M83.1 133.6v3" stroke="#707070" stroke-width="1" fill="none"/>
<text x="88.4" y="139.4" textLength="31.3" lengthAdjust="spacingAndGlyphs">510nm</text>
<path d="M123.2 79.0h3M124.7 77.5v3" stroke="#707070" stroke-width="1" fill="none"/>
<text x="130.0" y="83.3" textLength="31.3" lengthAdjust="spacingAndGlyphs">520nm</text>
<path d="M178.6 97.7h3M180.1 96.2v3" stroke="#707070" stroke-width="1" fill="none"/>
<text x="185.4" y="102.0" textLength="31.3" lengthAdjust="spacingAndGlyphs">530nm</text>
<path d="M230.2 132.3h3M231.7 130.8v3" stroke="#707070" stroke-width="1" fill="none"/>
<text x="237.0" y="136.6" textLength="31.3" lengthAdjust="spacingAndGlyphs">540nm</text>
<path d="M279.8 173.9h3M281.3 172.4v3" stroke="#707070" stroke-width="1" fill="none"/>
<text x="286.6" y="178.2" textLength="31.3" lengthAdjust="spacingAndGlyphs">550nm</text>
<path d="M329.0 219.4h3M330.5 217.9v3" stroke="#707070" stroke-width="1" fill="none"/>
<text x="335.8" y="223.7" textLength="31.3" lengthAdjust="spacingAndGlyphs">560nm</text>
<path d="M377.9 266.2h3M379.4 264.7v3" stroke="#707070" stroke-width="1" fill="none"/>
<text x="384.7" y="270.5" textLength="31.3" lengthAdjust="spacingAndGlyphs">570nm</text>
<path d="M425.1 311.9h3M426.6 310.4v3" stroke="#707070" stroke-width="1" fill="none"/>
<text x="431.9" y="316.2" textLength="31.3" lengthAdjust="spacingAndGlyphs">580nm</text>
<path d="M468.3 353.8h3M469.8 352.3v3" stroke="#707070" stroke-width="1" fill="none"/>
<text x="475.1" y="358.1" textLength="31.3" lengthAdjust="spacingAndGlyphs">590nm</text>
<path d="M503.9 388.5h3M505.4 387.0v3" stroke="#707070" stroke-width="1" fill="none"/>
<text x="510.7" y="392.8" textLength="31.3" lengthAdjust="spacingAndGlyphs">600nm</text>
<path d="M530.7 414.3h3M532.2 412.8v3" stroke="#707070" stroke-width="1" fill="none"/>
<text x="537.5" y="418.6" textLength="31.3" lengthAdjust="spacingAndGlyphs">610nm</text>
<path d="M548.4 431.6h3M549.9 430.1v3" stroke="#707070" stroke-width="1" fill="none"/>
<text x="555.2" y="435.9" textLength="31.3" lengthAdjust="spacingAndGlyphs">620nm</text>
<path d="M567.3 450.0h3M568.8 448.5v3" stroke="#707070" stroke-width="1" fill="none"/>
<text x="574.1" y="454.3" textLength="31.3" lengthAdjust="spacingAndGlyphs">640nm</text>
<path d="M578.1 460.4h3M579.6 458.9v3" stroke="#707070" stroke-width="1" fill="none"/>
<text x="584.9" y="464.7" textLength="31.3" lengthAdjust="spacingAndGlyphs">780nm</text>
<path d="M301.6 414.8h3M303.1 413.3v3" stroke="#808080" stroke-width="1" fill="none"/>
<text x="308.9" y="419.1" textLength="74" lengthAdjust="spacingAndGlyphs">CIE White Point</text>
</g>
<g fill="#9c9c00" shape-rendering="crispEdges">
<rect x="142" y="34" width="1" height="604"/>
<rect x="211" y="34" width="1" height="604"/>
<rect x="280" y="34" width="1" height="604"/>
<rect x="349" y="34" width="1" height="604"/>
<rect x="417" y="34" width="1" height="604"/>
<rect x="486" y="34" width="1" height="604"/>
<rect x="555" y="34" width="1" height="604"/>
<rect x="624" y="34" width="1" height="604"/>
<rect x="73" y="604" width="621" height="1"/>
<rect x="73" y="571" width="621" height="1"/>
<rect x="73" y="537" width="621" height="1"/>
<rect x="73" y="504" width="621" height="1"/>
<rect x="73" y="470" width="621" height="1"/>
<rect x="73" y="437" width="621" height="1"/>
<rect x="73" y="403" width="621" height="1"/>
<rect x="73" y="370" width="621" height="1"/>
<rect x="73" y="336" width="621" height="1"/>
<rect x="73" y="302" width="621" height="1"/>
<rect x="73" y="269" width="621" height="1"/>
<rect x="73" y="235" width="621" height="1"/>
<rect x="73" y="202" width="621" height="1"/>
<rect x="73" y="168" width="621" height="1"/>
<rect x="73" y="135" width="621" height="1"/>
<rect x="73" y="101" width="621" height="1"/>
<rect x="73" y="68" width="621" height="1"/>
</g>
<g clip-path="url(#cp)">
<path d="M243.2 475.3 L243.9 474.3 L244.7 473.1 L245.9 471.5 L246.8 470.3 L247.4 469.2 L248.7 467.5 L250.0 465.8 L251.3 464.0 L252.7 462.2 L254.2 460.4 L255.7 458.5 L257.2 456.6 L258.8 454.6 L260.4 452.6 L262.1 450.6 L263.8 448.6 L265.5 446.5 L267.3 444.5 L269.1 442.4 L271.0 440.3 L272.9 438.2 L274.8 436.1 L276.8 434.1 L278.7 432.0 L280.8 429.9 L282.8 427.8 L284.9 425.7 L286.9 423.7 L289.1 421.7 L291.2 419.6 L293.3 417.6 L295.5 415.7 L297.7 413.7 L299.9 411.8 L302.1 409.9 L304.4 408.0 L306.6 406.1 L308.9 404.3 L311.2 402.5 L313.4 400.8 L315.7 399.1 L318.0 397.4 L320.3 395.7 L322.6 394.1 L324.9 392.5 L327.2 391.0 L329.6 389.5 L331.9 388.0 L334.2 386.6 L336.5 385.1 L338.8 383.8 L341.1 382.4 L343.3 381.1 L345.6 379.9 L347.8 378.7 L350.1 377.5 L352.3 376.4 L354.5 375.3 L356.6 374.3 L358.8 373.3 L361.0 372.4 L363.1 371.5 L365.2 370.6 L367.3 369.8 L369.4 369.0 L371.5 368.2 L373.6 367.5 L375.6 366.8 L377.7 366.1 L379.7 365.5 L381.7 365.0 L383.7 364.4 L385.6 363.9 L387.6 363.4 L389.5 363.0 L391.5 362.6 L393.4 362.2 L395.2 361.8 L397.1 361.5 L399.0 361.2 L400.8 361.0 L402.6 360.7 L404.4 360.5 L406.2 360.3 L408.0 360.2 L409.8 360.1 L411.5 360.0 L413.2 359.9 L414.9 359.8 L416.6 359.8 L418.3 359.8 L419.9 359.8 L421.6 359.8 L423.2 359.9 L424.8 360.0 L426.3 360.1 L427.9 360.2 L429.4 360.3 L431.0 360.4 L432.5 360.6 L433.9 360.8 L435.4 361.0 L436.8 361.2 L438.3 361.4 L439.7 361.7 L441.1 361.9 L442.4 362.2 L443.8 362.5 L445.1 362.8 L446.4 363.1 L447.7 363.4 L448.9 363.7 L450.2 364.1 L451.4 364.4 L452.6 364.8 L453.8 365.1 L455.0 365.5 L456.1 365.8 L457.2 366.2 L458.3 366.6 L459.4 367.0 L460.5 367.4 L461.5 367.7 L462.5 368.1 L477.0 374.7 L504.1 391.9 L523.2 407.4 L531.6 414.7 L538.5 421.2 L544.7 427.1" fill="none" stroke="#6e6e6e" stroke-width="1" shape-rendering="crispEdges"/>
<path d="M280.2 408.4 L376.6 348.8 L417.9 343.2 L417.9 382.1 L376.6 382.1 L280.2 452.6 Z M376.6 348.8 L376.6 382.1" fill="none" stroke="#000" stroke-width="1" shape-rendering="crispEdges"/>
<g fill="#000" shape-rendering="crispEdges"><rect x="279" y="407" width="3" height="3"/><rect x="375" y="347" width="3" height="3"/><rect x="416" y="342" width="3" height="3"/><rect x="416" y="381" width="3" height="3"/><rect x="375" y="381" width="3" height="3"/><rect x="279" y="451" width="3" height="3"/></g>
<g fill="#ff0000" shape-rendering="crispEdges"><rect x="289" y="34" width="1" height="604"/><rect x="73" y="418" width="621" height="1"/></g>
<circle cx="289.5" cy="418.5" r="2.8" fill="#ff0000"/>
</g>
<g fill="#000" shape-rendering="crispEdges">
<rect x="73" y="640" width="1" height="5"/>
<rect x="66" y="638" width="5" height="1"/>
<rect x="142" y="640" width="1" height="5"/>
<rect x="66" y="571" width="5" height="1"/>
<rect x="211" y="640" width="1" height="5"/>
<rect x="66" y="504" width="5" height="1"/>
<rect x="280" y="640" width="1" height="5"/>
<rect x="66" y="437" width="5" height="1"/>
<rect x="349" y="640" width="1" height="5"/>
<rect x="66" y="370" width="5" height="1"/>
<rect x="417" y="640" width="1" height="5"/>
<rect x="66" y="302" width="5" height="1"/>
<rect x="486" y="640" width="1" height="5"/>
<rect x="66" y="235" width="5" height="1"/>
<rect x="555" y="640" width="1" height="5"/>
<rect x="66" y="168" width="5" height="1"/>
<rect x="624" y="640" width="1" height="5"/>
<rect x="66" y="101" width="5" height="1"/>
<rect x="693" y="640" width="1" height="5"/>
<rect x="66" y="34" width="5" height="1"/>
</g>
<g font-size="11.5" fill="#000" stroke="#000" stroke-width="0.2">
<text x="55.8" y="656" textLength="32.5" lengthAdjust="spacingAndGlyphs">0.0000</text>
<text x="30.6" y="642.1" textLength="32.5" lengthAdjust="spacingAndGlyphs">0.0000</text>
<text x="124.8" y="656" textLength="32.5" lengthAdjust="spacingAndGlyphs">0.1000</text>
<text x="30.6" y="575.1" textLength="32.5" lengthAdjust="spacingAndGlyphs">0.1000</text>
<text x="193.8" y="656" textLength="32.5" lengthAdjust="spacingAndGlyphs">0.2000</text>
<text x="30.6" y="508.1" textLength="32.5" lengthAdjust="spacingAndGlyphs">0.2000</text>
<text x="262.8" y="656" textLength="32.5" lengthAdjust="spacingAndGlyphs">0.3000</text>
<text x="30.6" y="441.1" textLength="32.5" lengthAdjust="spacingAndGlyphs">0.3000</text>
<text x="331.8" y="656" textLength="32.5" lengthAdjust="spacingAndGlyphs">0.4000</text>
<text x="30.6" y="374.1" textLength="32.5" lengthAdjust="spacingAndGlyphs">0.4000</text>
<text x="399.8" y="656" textLength="32.5" lengthAdjust="spacingAndGlyphs">0.5000</text>
<text x="30.6" y="306.1" textLength="32.5" lengthAdjust="spacingAndGlyphs">0.5000</text>
<text x="468.8" y="656" textLength="32.5" lengthAdjust="spacingAndGlyphs">0.6000</text>
<text x="30.6" y="239.1" textLength="32.5" lengthAdjust="spacingAndGlyphs">0.6000</text>
<text x="537.8" y="656" textLength="32.5" lengthAdjust="spacingAndGlyphs">0.7000</text>
<text x="30.6" y="172.1" textLength="32.5" lengthAdjust="spacingAndGlyphs">0.7000</text>
<text x="606.8" y="656" textLength="32.5" lengthAdjust="spacingAndGlyphs">0.8000</text>
<text x="30.6" y="105.1" textLength="32.5" lengthAdjust="spacingAndGlyphs">0.8000</text>
<text x="675.8" y="656" textLength="32.5" lengthAdjust="spacingAndGlyphs">0.9000</text>
<text x="30.6" y="38.1" textLength="32.5" lengthAdjust="spacingAndGlyphs">0.9000</text>
<text x="383.8" y="675" text-anchor="middle">x</text>
<text transform="translate(23.2,338.5) rotate(-90)" text-anchor="middle">y</text>
</g>
</svg>
</body></html>
